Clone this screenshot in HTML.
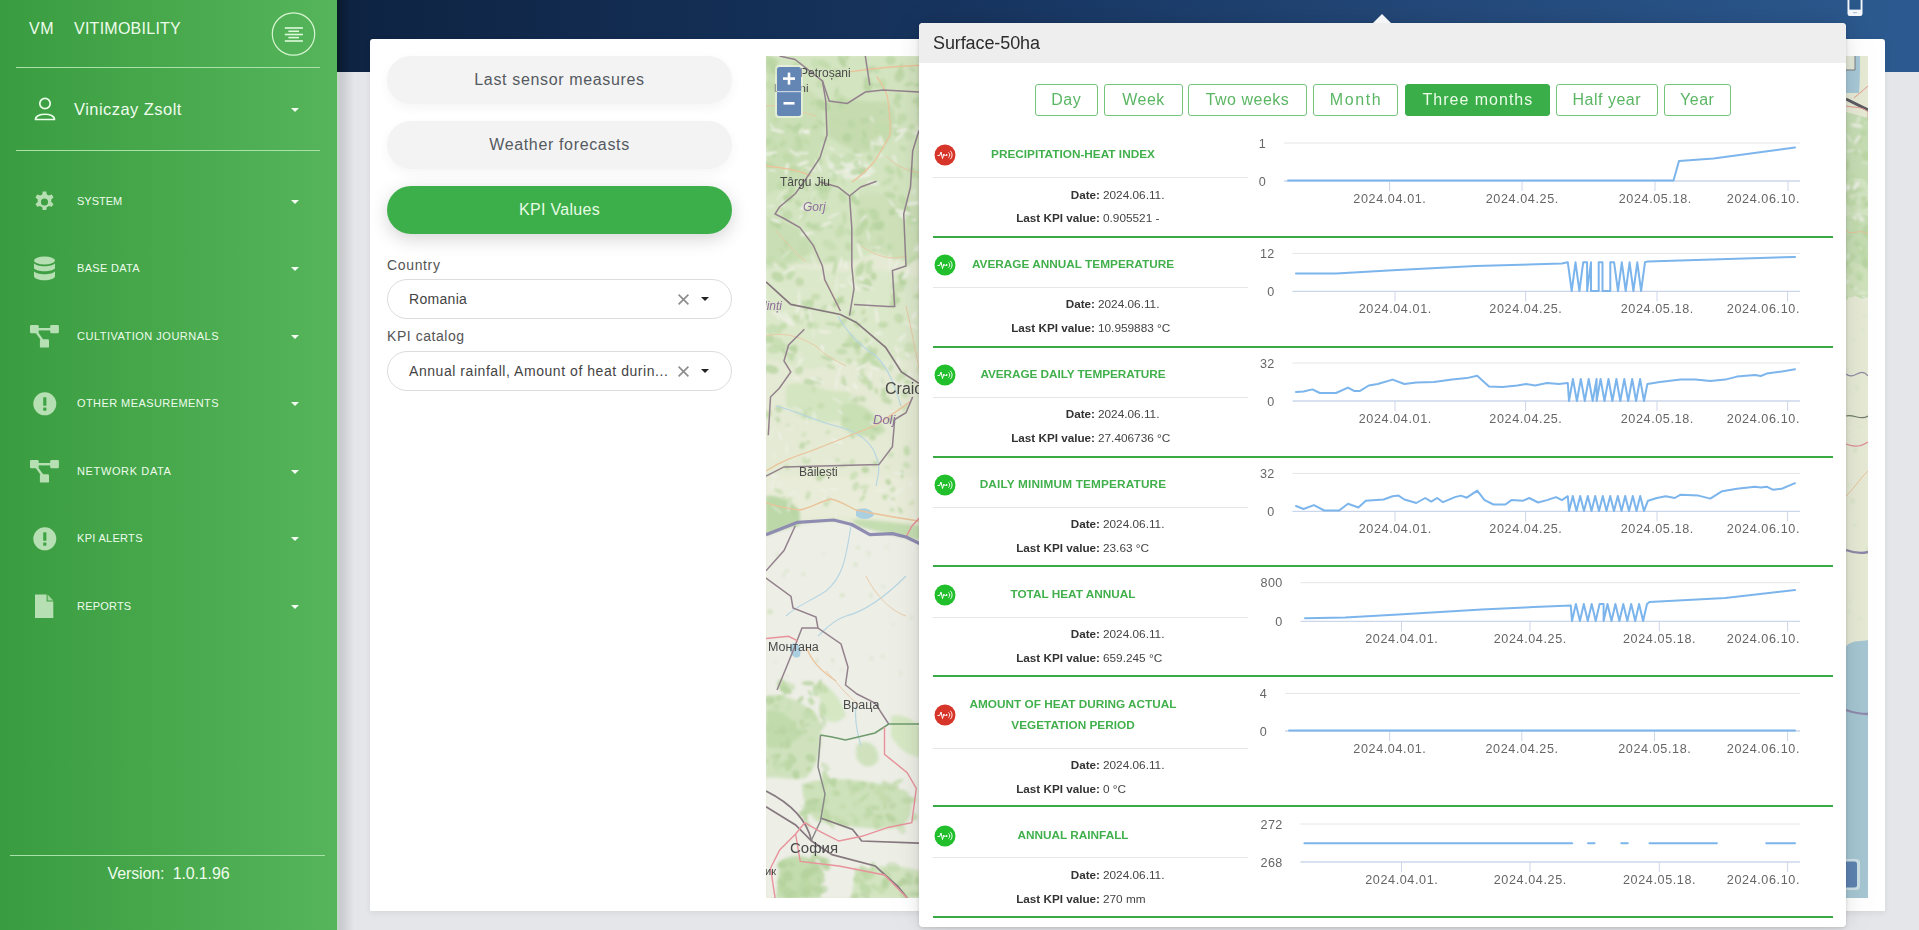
<!DOCTYPE html>
<html><head><meta charset="utf-8"><title>Vitimobility</title>
<style>
html,body{margin:0;padding:0}
body{width:1919px;height:930px;overflow:hidden;position:relative;background:#e5e6ea;font-family:"Liberation Sans",sans-serif}
#sidebar{position:absolute;left:0;top:0;width:337px;height:930px;background:linear-gradient(to right,#3a9c40 0%,#46a74b 45%,#56b55b 100%);z-index:5;color:#e9fbe7}
#sidebar .brand{position:absolute;top:20px;font-size:16px;color:#eefcec;white-space:nowrap}
#sidebar .vm{left:29px;letter-spacing:0.5px}
#sidebar .vt{left:74px;letter-spacing:0.25px}
.hamb{position:absolute;left:271px;top:12px}
.sline{position:absolute;left:16px;width:304px;height:1.3px;background:#a9e2a8}
.usericon{position:absolute;left:34px;top:97px}
.uname{position:absolute;left:74px;top:99.5px;font-size:16.5px;letter-spacing:0.45px;color:#effcee;white-space:nowrap}
.caret{position:absolute;left:291px;width:0;height:0;border-left:4.2px solid transparent;border-right:4.2px solid transparent;border-top:4.6px solid #f2fbf1}
.micon{position:absolute;left:33px}
.mtext{position:absolute;left:77px;font-size:11px;letter-spacing:0.3px;color:#eefcec;white-space:nowrap}
.version{position:absolute;left:0;width:337px;text-align:center;top:864.5px;font-size:16px;color:#eefcec;letter-spacing:-0.15px}
#header{position:absolute;left:337px;top:0;width:1582px;height:72px;background:linear-gradient(to right,#0e2342 0%,#173560 40%,#24497a 70%,#2c5a90 100%)}
#phone{position:absolute;left:1846px;top:0}
#sbshadow{position:absolute;left:337px;top:72px;width:18px;height:858px;z-index:3;background:linear-gradient(to right,rgba(150,200,150,0.45) 0px,rgba(60,60,70,0.16) 4px,rgba(0,0,0,0.08) 9px,rgba(0,0,0,0) 17px)}
#hshadow{position:absolute;left:337px;top:0;width:14px;height:72px;z-index:3;background:linear-gradient(to right,rgba(0,25,15,0.55) 0px,rgba(0,10,20,0.25) 5px,rgba(0,0,0,0) 13px)}
#card{position:absolute;left:370px;top:39px;width:1515px;height:871.5px;background:#fff;border-radius:3px 3px 1px 1px;box-shadow:0 2px 6px rgba(0,0,0,0.07)}
.pill{position:absolute;left:17px;width:345px;height:48px;border-radius:24px;background:#f3f3f4;box-shadow:0 4px 12px rgba(0,0,0,0.045);color:#555a60;font-size:16px;letter-spacing:0.65px;text-align:center;line-height:48px;white-space:nowrap}
.pill.active{background:#3daf4a;color:#e6fbe4;letter-spacing:0.3px;box-shadow:0 5px 18px rgba(0,0,0,0.17)}
.flabel{position:absolute;left:17px;font-size:14px;color:#555;letter-spacing:0.3px}
.sel{position:absolute;left:17px;width:343px;height:38px;border:1px solid #dcdcdc;border-radius:20px;background:#fff}
.selt{position:absolute;left:21px;top:11px;font-size:14px;color:#444;white-space:nowrap}
.selx{position:absolute;left:290px;top:14px;width:11px;height:11px}
.selc{position:absolute;left:313px;top:17px;width:0;height:0;border-left:4.3px solid transparent;border-right:4.3px solid transparent;border-top:4.8px solid #222}
#mapwrap{position:absolute;left:766px;top:56px;width:1102px;height:843px;overflow:hidden}
#map{position:absolute;left:0;top:0}
#popup{position:absolute;left:919px;top:23px;width:927px;height:904px;background:#fff;border-radius:4px;box-shadow:0 1px 4px rgba(0,0,0,0.16),0 0 24px rgba(0,0,0,0.09),0 0 50px rgba(0,0,0,0.04);z-index:6}
#arrow{position:absolute;left:454px;top:-9px;width:0;height:0;border-left:9px solid transparent;border-right:9px solid transparent;border-bottom:9.5px solid #f4f5f7}
#phead{position:absolute;left:0;top:0;width:927px;height:40px;background:#eeeeee;border-radius:4px 4px 0 0;font-size:18px;color:#2c2c2c;line-height:40px;text-indent:14px;letter-spacing:-0.1px}
.tbtn{position:absolute;top:61px;height:31.5px;border:1.3px solid #74c47b;border-radius:3px;color:#5bb664;font-size:16px;text-align:center;line-height:29.5px;letter-spacing:0.5px;box-sizing:border-box;white-space:nowrap}
.tbtn.on{background:#3aae48;border-color:#3aae48;color:#ebfbe8}
.kicon{position:absolute}
.ktitle{position:absolute;left:36px;width:236px;text-align:center;font-size:11.8px;font-weight:700;color:#41b04c;white-space:nowrap;line-height:16px}
.gline{position:absolute;left:14px;width:315px;height:1.3px;background:#e6e6e6;margin-top:-23px}
.grline{position:absolute;left:14px;width:900px;height:2.2px;background:#3aaa45;margin-top:-23px}
.klab{position:absolute;font-size:11.7px;font-weight:700;color:#333;white-space:nowrap;line-height:16px;margin-top:-23px}
.kval{position:absolute;font-size:11.8px;color:#444;white-space:nowrap;line-height:16px;margin-top:-23px}
.ktitle{margin-top:-23px}
.kicon{margin-top:-23px}
.yl{font-family:"Liberation Sans";font-size:12.6px;fill:#666;letter-spacing:0.3px}
.xl{font-family:"Liberation Sans";font-size:12.6px;fill:#666;letter-spacing:0.6px}

</style></head>
<body>
<div id="sidebar">
  <div class="brand vm">VM</div>
  <div class="brand vt">VITIMOBILITY</div>
  <svg class="hamb" width="46" height="46" viewBox="0 0 46 46">
    <circle cx="22.5" cy="22" r="21.2" fill="none" stroke="#d6f5d2" stroke-width="1.2"/>
    <g stroke="#e0fadc" stroke-width="1.6">
      <line x1="13.8" y1="16" x2="31.9" y2="16"/>
      <line x1="17.4" y1="19.3" x2="28" y2="19.3"/>
      <line x1="13.8" y1="22.5" x2="31.9" y2="22.5"/>
      <line x1="17.4" y1="25.6" x2="28" y2="25.6"/>
      <line x1="13.8" y1="29" x2="31.9" y2="29"/>
    </g>
  </svg>
  <div class="sline" style="top:67px"></div>
  <svg class="usericon" width="22" height="24" viewBox="0 0 22 24">
    <circle cx="11" cy="6.5" r="5.2" fill="none" stroke="#eaffea" stroke-width="1.7"/>
    <path d="M1.5 22.5 C1.5 15.5 20.5 15.5 20.5 22.5 Z" fill="none" stroke="#eaffea" stroke-width="1.7" stroke-linejoin="round"/>
  </svg>
  <div class="uname">Viniczay Zsolt</div>
  <div class="caret" style="top:108px"></div>
  <div class="sline" style="top:150px"></div>

  <!-- menu -->
  <svg class="micon" style="top:190px" width="23" height="23" viewBox="0 0 24 24"><path fill="#b6e0b3" d="M10.2 1h3.6l.6 3.1c.8.3 1.5.7 2.2 1.2l3-1 1.8 3.1-2.4 2.1c.1.8.1 1.6 0 2.4l2.4 2.1-1.8 3.1-3-1c-.7.5-1.4.9-2.2 1.2l-.6 3.1h-3.6l-.6-3.1c-.8-.3-1.5-.7-2.2-1.2l-3 1-1.8-3.1 2.4-2.1c-.1-.8-.1-1.6 0-2.4L2.6 7.4l1.8-3.1 3 1c.7-.5 1.4-.9 2.2-1.2zM12 8.3a3.7 3.7 0 100 7.4 3.7 3.7 0 000-7.4z" transform="translate(0,0.5)"/></svg>
  <div class="mtext" style="top:195px;letter-spacing:0px">SYSTEM</div>
  <div class="caret" style="top:200px"></div>

  <svg class="micon" style="top:256px" width="23" height="25" viewBox="0 0 23 25"><g fill="#b6e0b3"><ellipse cx="11.5" cy="4.5" rx="10.5" ry="4"/><path d="M1 7.3c1.5 2 5.5 3 10.5 3s9-1 10.5-3v5c-1.5 2-5.5 3-10.5 3s-9-1-10.5-3z"/><path d="M1 15.3c1.5 2 5.5 3 10.5 3s9-1 10.5-3v5c0 2.2-4.7 4-10.5 4S1 22.5 1 20.3z"/></g></svg>
  <div class="mtext" style="top:262px;letter-spacing:0.3px">BASE DATA</div>
  <div class="caret" style="top:267px"></div>

  <svg class="micon" style="top:324px;left:30px" width="30" height="25" viewBox="0 0 30 25"><g fill="#b6e0b3"><rect x="0" y="1" width="8.7" height="8.3" rx="1.2"/><rect x="20.2" y="1" width="8.7" height="8.3" rx="1.2"/><rect x="9.9" y="15.3" width="9.1" height="8.3" rx="1.2"/><rect x="8" y="4" width="13" height="2.4"/><path d="M5 8 L7 6.8 L14 16.5 L12 17.7z"/></g></svg>
  <div class="mtext" style="top:330px;letter-spacing:0.5px">CULTIVATION JOURNALS</div>
  <div class="caret" style="top:335px"></div>

  <svg class="micon" style="top:392px" width="24" height="24" viewBox="0 0 24 24"><circle cx="11.8" cy="11.8" r="11.5" fill="#b6e0b3"/><rect x="10.2" y="5.2" width="3.2" height="8.6" fill="#3ea444" rx="0.6"/><rect x="10.2" y="15.5" width="3.2" height="3.2" fill="#3ea444" rx="0.6"/></svg>
  <div class="mtext" style="top:397px;letter-spacing:0.42px">OTHER MEASUREMENTS</div>
  <div class="caret" style="top:402px"></div>

  <svg class="micon" style="top:459px;left:30px" width="30" height="25" viewBox="0 0 30 25"><g fill="#b6e0b3"><rect x="0" y="1" width="8.7" height="8.3" rx="1.2"/><rect x="20.2" y="1" width="8.7" height="8.3" rx="1.2"/><rect x="9.9" y="15.3" width="9.1" height="8.3" rx="1.2"/><rect x="8" y="4" width="13" height="2.4"/><path d="M5 8 L7 6.8 L14 16.5 L12 17.7z"/></g></svg>
  <div class="mtext" style="top:465px;letter-spacing:0.63px">NETWORK DATA</div>
  <div class="caret" style="top:470px"></div>

  <svg class="micon" style="top:527px" width="24" height="24" viewBox="0 0 24 24"><circle cx="11.8" cy="11.8" r="11.5" fill="#b6e0b3"/><rect x="10.2" y="5.2" width="3.2" height="8.6" fill="#3ea444" rx="0.6"/><rect x="10.2" y="15.5" width="3.2" height="3.2" fill="#3ea444" rx="0.6"/></svg>
  <div class="mtext" style="top:532px;letter-spacing:0.3px">KPI ALERTS</div>
  <div class="caret" style="top:537px"></div>

  <svg class="micon" style="top:594px;left:35px" width="19" height="24" viewBox="0 0 19 24"><path fill="#b6e0b3" d="M0 0.5h11.6v7h6.7v16.4H0z"/><path fill="#9fd69c" d="M12.6 0.5l5.7 6H12.6z"/></svg>
  <div class="mtext" style="top:600px;letter-spacing:0.2px">REPORTS</div>
  <div class="caret" style="top:605px"></div>

  <div class="sline" style="top:855px;left:10px;width:315px"></div>
  <div class="version">Version:&nbsp; 1.0.1.96</div>
</div>

<div id="header"></div>
<svg id="phone" width="18" height="17" viewBox="0 0 18 17"><path d="M3.8 -3 H14.2 A2.3 2.3 0 0 1 16.5 -0.7 V13.8 A2.3 2.3 0 0 1 14.2 16.1 H3.8 A2.3 2.3 0 0 1 1.5 13.8 V-0.7 A2.3 2.3 0 0 1 3.8 -3Z" fill="#f4f7fb"/><rect x="3.4" y="-3" width="11.2" height="12.6" fill="#2a5789"/><rect x="7" y="12" width="4" height="1.2" fill="#b9c6d8"/></svg>
<div id="sbshadow"></div><div id="hshadow"></div>
<div id="card">
  <div class="pill" style="top:17px">Last sensor measures</div>
  <div class="pill" style="top:82px">Weather forecasts</div>
  <div class="pill active" style="top:147px">KPI Values</div>
  <div class="flabel" style="top:217.5px;letter-spacing:0.65px">Country</div>
  <div class="sel" style="top:240px"><span class="selt" style="letter-spacing:0.3px">Romania</span><svg class="selx" viewBox="0 0 11 11"><path d="M0.6 0.6L10.4 10.4M10.4 0.6L0.6 10.4" stroke="#8c8c8c" stroke-width="1.6"/></svg><span class="selc"></span></div>
  <div class="flabel" style="top:289px;letter-spacing:0.55px">KPI catalog</div>
  <div class="sel" style="top:312px"><span class="selt" style="letter-spacing:0.55px">Annual rainfall, Amount of heat durin...</span><svg class="selx" viewBox="0 0 11 11"><path d="M0.6 0.6L10.4 10.4M10.4 0.6L0.6 10.4" stroke="#8c8c8c" stroke-width="1.6"/></svg><span class="selc"></span></div>
</div>

<div id="mapwrap"><svg id="map" width="1102" height="842" viewBox="0 0 1102 842">
  <defs>
    <filter id="bl" x="-10%" y="-10%" width="120%" height="120%"><feGaussianBlur stdDeviation="1.6"/></filter>
    <filter id="bl2" x="0" y="0" width="100%" height="100%"><feGaussianBlur stdDeviation="0.9"/></filter>
  </defs>
  <rect x="0" y="0" width="160" height="842" fill="#e4ead3"/>
  <g filter="url(#bl)">
    <!-- north greener region -->
    <path d="M0 0 H160 V200 C140 210 120 190 100 200 C70 215 40 200 0 215Z" fill="#d3e4c0"/>
    <path d="M0 20 C20 10 40 30 55 45 C60 70 58 100 40 120 C25 135 10 130 0 140Z" fill="#cadfb5"/>
    <path d="M60 45 C80 40 100 48 120 45 C135 55 130 80 115 95 C95 100 75 90 62 80Z" fill="#c6dcb0"/>
    <path d="M90 140 C110 130 140 150 160 145 V200 C130 215 110 190 90 190Z" fill="#cde0b8"/>
    <path d="M0 160 C20 165 40 175 50 190 C40 205 20 210 0 210Z" fill="#c9deb4"/>
    <path d="M60 100 C80 95 100 105 110 115 C100 125 80 125 65 120Z" fill="#e6eddb"/>
    <path d="M0 215 C30 205 60 220 90 215 C120 210 140 225 160 220 V300 C130 310 90 300 60 310 C30 320 15 300 0 305Z" fill="#dce8ca"/>
    <path d="M20 330 C40 320 60 340 80 335 C100 345 90 365 70 365 C50 370 30 360 20 350Z" fill="#d4e5c1"/>
    <path d="M75 350 C95 340 110 360 120 375 C105 385 85 380 75 370Z" fill="#c9dfb4"/>
    <path d="M0 420 H160 V470 C130 465 100 462 70 460 C40 462 20 470 0 472Z" fill="#e8ecd8"/>
    <path d="M0 440 C15 438 30 448 34 456 V476 C20 477 10 478 0 479Z" fill="#bcd8a8"/>
    <path d="M86 464 C100 462 130 468 160 470 V485 C130 480 110 478 95 474Z" fill="#c4ddb0"/>
    <!-- south of danube -->
    <path d="M0 480 C30 468 60 463 86 468 C105 476 130 478 160 488 V842 H0Z" fill="#edeee6"/>
    <path d="M0 640 C20 635 45 650 54 665 C58 690 52 710 40 722 C25 725 10 720 0 722Z" fill="#cfe2bd"/>
    <path d="M0 655 C15 650 30 665 35 680 C25 690 10 695 0 690Z" fill="#c2dbad"/>
    <path d="M36 728 C60 720 100 722 141 735 C150 750 145 770 130 772 C100 775 70 768 50 765 C40 755 36 740 36 728Z" fill="#cde1ba"/>
    <path d="M90 690 C100 680 115 690 112 705 C105 715 92 710 90 700Z" fill="#cfe2bd"/>
    <path d="M14 805 C30 795 50 800 55 815 V842 H10Z" fill="#c3dcae"/>
    <path d="M90 815 C120 805 150 812 160 818 V842 H85Z" fill="#d2e4c0"/>
    <path d="M52 630 C60 625 75 640 80 660 C70 670 60 668 55 655Z" fill="#d6e7c4"/>
    <path d="M125 660 C140 655 155 670 160 680 V700 C145 705 130 690 125 680Z" fill="#d6e7c4"/>
  </g>
  <g id="tex" filter="url(#bl2)"><ellipse cx="51.8" cy="49.8" rx="5.9" ry="1.8" transform="rotate(96 51.8 49.8)" fill="#c2dbac" opacity="0.73"/><ellipse cx="145.6" cy="70.9" rx="2.5" ry="3.0" transform="rotate(43 145.6 70.9)" fill="#b7d3a0" opacity="0.67"/><ellipse cx="132.3" cy="40.9" rx="3.3" ry="3.7" transform="rotate(171 132.3 40.9)" fill="#b7d3a0" opacity="0.73"/><ellipse cx="7.9" cy="73.0" rx="5.3" ry="2.0" transform="rotate(75 7.9 73.0)" fill="#b7d3a0" opacity="0.55"/><ellipse cx="49.4" cy="269.3" rx="3.1" ry="3.5" transform="rotate(115 49.4 269.3)" fill="#c2dbac" opacity="0.54"/><ellipse cx="113.9" cy="186.2" rx="5.7" ry="3.2" transform="rotate(96 113.9 186.2)" fill="#c2dbac" opacity="0.69"/><ellipse cx="147.8" cy="119.3" rx="3.5" ry="2.1" transform="rotate(140 147.8 119.3)" fill="#bcd7a5" opacity="0.73"/><ellipse cx="84.0" cy="288.8" rx="6.4" ry="2.5" transform="rotate(176 84.0 288.8)" fill="#bcd7a5" opacity="0.70"/><ellipse cx="26.4" cy="112.9" rx="7.6" ry="3.0" transform="rotate(173 26.4 112.9)" fill="#bcd7a5" opacity="0.81"/><ellipse cx="91.7" cy="288.9" rx="3.9" ry="3.9" transform="rotate(107 91.7 288.9)" fill="#b7d3a0" opacity="0.82"/><ellipse cx="11.0" cy="30.9" rx="3.6" ry="3.9" transform="rotate(12 11.0 30.9)" fill="#b7d3a0" opacity="0.78"/><ellipse cx="103.5" cy="327.7" rx="6.9" ry="2.5" transform="rotate(69 103.5 327.7)" fill="#b7d3a0" opacity="0.64"/><ellipse cx="150.5" cy="117.3" rx="5.7" ry="3.2" transform="rotate(39 150.5 117.3)" fill="#c2dbac" opacity="0.55"/><ellipse cx="39.6" cy="129.0" rx="7.2" ry="1.8" transform="rotate(81 39.6 129.0)" fill="#b7d3a0" opacity="0.61"/><ellipse cx="21.9" cy="142.1" rx="5.3" ry="4.0" transform="rotate(178 21.9 142.1)" fill="#b7d3a0" opacity="0.85"/><ellipse cx="153.2" cy="49.8" rx="3.1" ry="2.3" transform="rotate(42 153.2 49.8)" fill="#c2dbac" opacity="0.83"/><ellipse cx="29.2" cy="93.0" rx="2.9" ry="3.4" transform="rotate(110 29.2 93.0)" fill="#c2dbac" opacity="0.88"/><ellipse cx="110.5" cy="170.1" rx="5.7" ry="3.9" transform="rotate(10 110.5 170.1)" fill="#b7d3a0" opacity="0.82"/><ellipse cx="62.8" cy="131.7" rx="2.6" ry="3.7" transform="rotate(11 62.8 131.7)" fill="#bcd7a5" opacity="0.89"/><ellipse cx="70.5" cy="36.3" rx="5.6" ry="1.9" transform="rotate(102 70.5 36.3)" fill="#b7d3a0" opacity="0.54"/><ellipse cx="58.2" cy="8.4" rx="7.2" ry="3.6" transform="rotate(27 58.2 8.4)" fill="#c2dbac" opacity="0.88"/><ellipse cx="96.4" cy="156.5" rx="2.7" ry="3.2" transform="rotate(176 96.4 156.5)" fill="#c2dbac" opacity="0.69"/><ellipse cx="13.7" cy="33.7" rx="4.1" ry="2.4" transform="rotate(149 13.7 33.7)" fill="#bcd7a5" opacity="0.71"/><ellipse cx="32.8" cy="314.2" rx="4.2" ry="3.9" transform="rotate(165 32.8 314.2)" fill="#b7d3a0" opacity="0.62"/><ellipse cx="102.9" cy="30.0" rx="7.1" ry="3.3" transform="rotate(163 102.9 30.0)" fill="#c2dbac" opacity="0.81"/><ellipse cx="85.2" cy="257.1" rx="4.0" ry="2.3" transform="rotate(146 85.2 257.1)" fill="#bcd7a5" opacity="0.82"/><ellipse cx="130.9" cy="244.2" rx="3.4" ry="3.3" transform="rotate(64 130.9 244.2)" fill="#bcd7a5" opacity="0.90"/><ellipse cx="126.4" cy="155.8" rx="3.2" ry="3.6" transform="rotate(62 126.4 155.8)" fill="#b7d3a0" opacity="0.90"/><ellipse cx="152.8" cy="120.3" rx="3.3" ry="2.3" transform="rotate(35 152.8 120.3)" fill="#bcd7a5" opacity="0.69"/><ellipse cx="157.6" cy="201.4" rx="2.0" ry="4.7" transform="rotate(62 157.6 201.4)" fill="#b7d3a0" opacity="0.53"/><ellipse cx="105.7" cy="300.2" rx="6.7" ry="4.1" transform="rotate(86 105.7 300.2)" fill="#bcd7a5" opacity="0.67"/><ellipse cx="101.7" cy="28.6" rx="7.7" ry="4.0" transform="rotate(83 101.7 28.6)" fill="#b7d3a0" opacity="0.88"/><ellipse cx="116.0" cy="56.1" rx="2.8" ry="2.0" transform="rotate(163 116.0 56.1)" fill="#b7d3a0" opacity="0.56"/><ellipse cx="132.2" cy="323.5" rx="5.9" ry="2.7" transform="rotate(99 132.2 323.5)" fill="#bcd7a5" opacity="0.51"/><ellipse cx="127.9" cy="239.7" rx="2.6" ry="4.1" transform="rotate(25 127.9 239.7)" fill="#bcd7a5" opacity="0.83"/><ellipse cx="33.8" cy="83.1" rx="3.8" ry="2.3" transform="rotate(106 33.8 83.1)" fill="#c2dbac" opacity="0.72"/><ellipse cx="133.5" cy="20.1" rx="6.4" ry="4.6" transform="rotate(119 133.5 20.1)" fill="#b7d3a0" opacity="0.67"/><ellipse cx="146.8" cy="165.5" rx="5.2" ry="3.3" transform="rotate(3 146.8 165.5)" fill="#c2dbac" opacity="0.81"/><ellipse cx="97.4" cy="256.1" rx="2.9" ry="2.0" transform="rotate(111 97.4 256.1)" fill="#bcd7a5" opacity="0.72"/><ellipse cx="52.2" cy="171.1" rx="5.3" ry="4.2" transform="rotate(19 52.2 171.1)" fill="#b7d3a0" opacity="0.52"/><ellipse cx="30.6" cy="13.9" rx="2.6" ry="3.1" transform="rotate(5 30.6 13.9)" fill="#bcd7a5" opacity="0.68"/><ellipse cx="98.0" cy="166.8" rx="5.1" ry="3.9" transform="rotate(81 98.0 166.8)" fill="#b7d3a0" opacity="0.82"/><ellipse cx="81.2" cy="81.7" rx="5.1" ry="4.6" transform="rotate(167 81.2 81.7)" fill="#b7d3a0" opacity="0.86"/><ellipse cx="32.4" cy="147.7" rx="4.5" ry="2.9" transform="rotate(57 32.4 147.7)" fill="#b7d3a0" opacity="0.60"/><ellipse cx="11.7" cy="220.9" rx="6.7" ry="4.6" transform="rotate(28 11.7 220.9)" fill="#b7d3a0" opacity="0.76"/><ellipse cx="58.6" cy="83.5" rx="2.8" ry="3.1" transform="rotate(134 58.6 83.5)" fill="#bcd7a5" opacity="0.66"/><ellipse cx="78.0" cy="326.7" rx="7.0" ry="2.1" transform="rotate(78 78.0 326.7)" fill="#b7d3a0" opacity="0.66"/><ellipse cx="67.4" cy="117.7" rx="2.6" ry="2.8" transform="rotate(61 67.4 117.7)" fill="#c2dbac" opacity="0.68"/><ellipse cx="2.9" cy="109.4" rx="5.7" ry="3.3" transform="rotate(12 2.9 109.4)" fill="#bcd7a5" opacity="0.89"/><ellipse cx="16.8" cy="87.6" rx="2.2" ry="4.2" transform="rotate(49 16.8 87.6)" fill="#bcd7a5" opacity="0.83"/><ellipse cx="135.9" cy="223.1" rx="7.7" ry="2.9" transform="rotate(97 135.9 223.1)" fill="#b7d3a0" opacity="0.73"/><ellipse cx="112.1" cy="29.5" rx="2.3" ry="3.9" transform="rotate(77 112.1 29.5)" fill="#bcd7a5" opacity="0.61"/><ellipse cx="2.7" cy="29.2" rx="3.6" ry="3.6" transform="rotate(40 2.7 29.2)" fill="#c2dbac" opacity="0.85"/><ellipse cx="72.6" cy="111.9" rx="5.3" ry="4.7" transform="rotate(48 72.6 111.9)" fill="#bcd7a5" opacity="0.52"/><ellipse cx="113.5" cy="309.6" rx="7.8" ry="2.4" transform="rotate(33 113.5 309.6)" fill="#c2dbac" opacity="0.75"/><ellipse cx="85.0" cy="67.9" rx="4.7" ry="3.9" transform="rotate(49 85.0 67.9)" fill="#bcd7a5" opacity="0.90"/><ellipse cx="5.9" cy="6.1" rx="5.0" ry="4.9" transform="rotate(93 5.9 6.1)" fill="#bcd7a5" opacity="0.87"/><ellipse cx="17.0" cy="270.2" rx="4.6" ry="3.2" transform="rotate(150 17.0 270.2)" fill="#c2dbac" opacity="0.89"/><ellipse cx="49.2" cy="71.0" rx="3.4" ry="2.2" transform="rotate(159 49.2 71.0)" fill="#b7d3a0" opacity="0.75"/><ellipse cx="64.8" cy="114.7" rx="2.3" ry="2.0" transform="rotate(13 64.8 114.7)" fill="#b7d3a0" opacity="0.85"/><ellipse cx="68.9" cy="18.3" rx="6.0" ry="2.8" transform="rotate(91 68.9 18.3)" fill="#c2dbac" opacity="0.74"/><ellipse cx="110.8" cy="14.9" rx="3.1" ry="2.4" transform="rotate(1 110.8 14.9)" fill="#c2dbac" opacity="0.88"/><ellipse cx="155.6" cy="180.5" rx="3.5" ry="4.9" transform="rotate(56 155.6 180.5)" fill="#c2dbac" opacity="0.57"/><ellipse cx="53.7" cy="27.7" rx="3.7" ry="3.8" transform="rotate(45 53.7 27.7)" fill="#bcd7a5" opacity="0.54"/><ellipse cx="130.7" cy="47.5" rx="5.5" ry="2.9" transform="rotate(54 130.7 47.5)" fill="#b7d3a0" opacity="0.59"/><ellipse cx="93.7" cy="174.6" rx="6.5" ry="3.8" transform="rotate(129 93.7 174.6)" fill="#b7d3a0" opacity="0.66"/><ellipse cx="52.2" cy="325.0" rx="2.9" ry="4.0" transform="rotate(116 52.2 325.0)" fill="#bcd7a5" opacity="0.83"/><ellipse cx="114.4" cy="169.3" rx="4.6" ry="4.0" transform="rotate(91 114.4 169.3)" fill="#b7d3a0" opacity="0.80"/><ellipse cx="91.0" cy="268.3" rx="2.1" ry="3.9" transform="rotate(144 91.0 268.3)" fill="#b7d3a0" opacity="0.77"/><ellipse cx="110.9" cy="75.9" rx="2.2" ry="2.0" transform="rotate(65 110.9 75.9)" fill="#bcd7a5" opacity="0.65"/><ellipse cx="72.2" cy="16.8" rx="2.1" ry="3.4" transform="rotate(44 72.2 16.8)" fill="#c2dbac" opacity="0.50"/><ellipse cx="127.6" cy="246.9" rx="5.0" ry="3.4" transform="rotate(119 127.6 246.9)" fill="#bcd7a5" opacity="0.80"/><ellipse cx="75.8" cy="267.0" rx="7.1" ry="2.3" transform="rotate(136 75.8 267.0)" fill="#bcd7a5" opacity="0.80"/><ellipse cx="156.1" cy="163.0" rx="4.3" ry="3.2" transform="rotate(123 156.1 163.0)" fill="#bcd7a5" opacity="0.75"/><ellipse cx="102.8" cy="25.6" rx="2.9" ry="2.4" transform="rotate(134 102.8 25.6)" fill="#c2dbac" opacity="0.75"/><ellipse cx="21.4" cy="159.2" rx="4.9" ry="4.9" transform="rotate(18 21.4 159.2)" fill="#bcd7a5" opacity="0.77"/><ellipse cx="46.5" cy="170.5" rx="4.8" ry="3.1" transform="rotate(21 46.5 170.5)" fill="#b7d3a0" opacity="0.58"/><ellipse cx="156.5" cy="309.0" rx="2.1" ry="3.1" transform="rotate(148 156.5 309.0)" fill="#c2dbac" opacity="0.90"/><ellipse cx="61.9" cy="302.5" rx="7.6" ry="1.8" transform="rotate(16 61.9 302.5)" fill="#b7d3a0" opacity="0.71"/><ellipse cx="152.4" cy="43.8" rx="6.9" ry="3.3" transform="rotate(160 152.4 43.8)" fill="#b7d3a0" opacity="0.65"/><ellipse cx="79.7" cy="289.1" rx="4.4" ry="2.1" transform="rotate(171 79.7 289.1)" fill="#b7d3a0" opacity="0.68"/><ellipse cx="48.3" cy="46.4" rx="4.1" ry="2.6" transform="rotate(151 48.3 46.4)" fill="#bcd7a5" opacity="0.63"/><ellipse cx="54.1" cy="131.4" rx="7.6" ry="2.2" transform="rotate(2 54.1 131.4)" fill="#b7d3a0" opacity="0.62"/><ellipse cx="59.6" cy="129.7" rx="8.0" ry="3.6" transform="rotate(65 59.6 129.7)" fill="#c2dbac" opacity="0.80"/><ellipse cx="136.7" cy="92.6" rx="2.3" ry="3.8" transform="rotate(114 136.7 92.6)" fill="#bcd7a5" opacity="0.60"/><ellipse cx="42.5" cy="168.6" rx="3.1" ry="2.8" transform="rotate(172 42.5 168.6)" fill="#bcd7a5" opacity="0.82"/><ellipse cx="100.9" cy="301.4" rx="7.6" ry="3.4" transform="rotate(130 100.9 301.4)" fill="#bcd7a5" opacity="0.87"/><ellipse cx="65.7" cy="202.9" rx="2.8" ry="4.5" transform="rotate(87 65.7 202.9)" fill="#b7d3a0" opacity="0.55"/><ellipse cx="75.5" cy="113.4" rx="3.8" ry="4.1" transform="rotate(176 75.5 113.4)" fill="#c2dbac" opacity="0.66"/><ellipse cx="38.2" cy="159.5" rx="6.0" ry="1.9" transform="rotate(116 38.2 159.5)" fill="#bcd7a5" opacity="0.58"/><ellipse cx="145.0" cy="164.0" rx="3.3" ry="4.7" transform="rotate(179 145.0 164.0)" fill="#c2dbac" opacity="0.67"/><ellipse cx="87.6" cy="80.5" rx="3.0" ry="3.4" transform="rotate(57 87.6 80.5)" fill="#c2dbac" opacity="0.60"/><ellipse cx="91.1" cy="292.8" rx="6.5" ry="2.9" transform="rotate(74 91.1 292.8)" fill="#b7d3a0" opacity="0.58"/><ellipse cx="43.2" cy="248.2" rx="5.0" ry="3.5" transform="rotate(65 43.2 248.2)" fill="#b7d3a0" opacity="0.70"/><ellipse cx="100.7" cy="284.7" rx="3.3" ry="2.4" transform="rotate(45 100.7 284.7)" fill="#c2dbac" opacity="0.76"/><ellipse cx="69.1" cy="103.0" rx="6.9" ry="4.9" transform="rotate(23 69.1 103.0)" fill="#c2dbac" opacity="0.78"/><ellipse cx="143.3" cy="156.2" rx="5.5" ry="1.5" transform="rotate(70 143.3 156.2)" fill="#b7d3a0" opacity="0.84"/><ellipse cx="155.6" cy="82.0" rx="2.7" ry="2.0" transform="rotate(94 155.6 82.0)" fill="#b7d3a0" opacity="0.54"/><ellipse cx="132.1" cy="231.3" rx="7.1" ry="4.6" transform="rotate(15 132.1 231.3)" fill="#bcd7a5" opacity="0.50"/><ellipse cx="20.1" cy="187.9" rx="2.2" ry="4.0" transform="rotate(173 20.1 187.9)" fill="#b7d3a0" opacity="0.60"/><ellipse cx="101.8" cy="230.5" rx="2.7" ry="1.7" transform="rotate(94 101.8 230.5)" fill="#b7d3a0" opacity="0.58"/><ellipse cx="41.7" cy="260.9" rx="2.0" ry="3.4" transform="rotate(179 41.7 260.9)" fill="#c2dbac" opacity="0.88"/><ellipse cx="103.1" cy="291.6" rx="4.9" ry="2.3" transform="rotate(44 103.1 291.6)" fill="#c2dbac" opacity="0.78"/><ellipse cx="49.2" cy="7.2" rx="5.0" ry="3.9" transform="rotate(76 49.2 7.2)" fill="#c2dbac" opacity="0.59"/><ellipse cx="67.9" cy="122.2" rx="5.0" ry="3.9" transform="rotate(129 67.9 122.2)" fill="#c2dbac" opacity="0.77"/><ellipse cx="31.7" cy="263.0" rx="6.4" ry="3.3" transform="rotate(37 31.7 263.0)" fill="#bcd7a5" opacity="0.62"/><ellipse cx="131.2" cy="76.2" rx="3.3" ry="4.2" transform="rotate(53 131.2 76.2)" fill="#b7d3a0" opacity="0.70"/><ellipse cx="30.0" cy="73.7" rx="4.5" ry="3.8" transform="rotate(171 30.0 73.7)" fill="#bcd7a5" opacity="0.87"/><ellipse cx="8.7" cy="7.8" rx="5.6" ry="3.0" transform="rotate(128 8.7 7.8)" fill="#bcd7a5" opacity="0.66"/><ellipse cx="143.7" cy="291.6" rx="6.4" ry="5.0" transform="rotate(168 143.7 291.6)" fill="#c2dbac" opacity="0.58"/><ellipse cx="104.4" cy="173.2" rx="4.8" ry="2.6" transform="rotate(131 104.4 173.2)" fill="#c2dbac" opacity="0.89"/><ellipse cx="70.8" cy="36.0" rx="2.5" ry="1.8" transform="rotate(76 70.8 36.0)" fill="#bcd7a5" opacity="0.72"/><ellipse cx="121.4" cy="125.4" rx="6.6" ry="2.6" transform="rotate(145 121.4 125.4)" fill="#bcd7a5" opacity="0.52"/><ellipse cx="75.8" cy="123.0" rx="7.5" ry="2.2" transform="rotate(66 75.8 123.0)" fill="#c2dbac" opacity="0.51"/><ellipse cx="65.7" cy="267.9" rx="6.6" ry="1.6" transform="rotate(6 65.7 267.9)" fill="#bcd7a5" opacity="0.82"/><ellipse cx="9.9" cy="64.3" rx="2.4" ry="3.6" transform="rotate(65 9.9 64.3)" fill="#c2dbac" opacity="0.88"/><ellipse cx="98.7" cy="86.5" rx="6.3" ry="2.6" transform="rotate(50 98.7 86.5)" fill="#bcd7a5" opacity="0.79"/><ellipse cx="95.3" cy="265.9" rx="7.7" ry="1.7" transform="rotate(149 95.3 265.9)" fill="#bcd7a5" opacity="0.69"/><ellipse cx="153.1" cy="314.8" rx="4.3" ry="2.4" transform="rotate(77 153.1 314.8)" fill="#c2dbac" opacity="0.55"/><ellipse cx="79.4" cy="2.9" rx="7.6" ry="2.6" transform="rotate(125 79.4 2.9)" fill="#bcd7a5" opacity="0.74"/><ellipse cx="52.4" cy="105.5" rx="4.2" ry="4.2" transform="rotate(14 52.4 105.5)" fill="#bcd7a5" opacity="0.66"/><ellipse cx="25.6" cy="134.6" rx="5.9" ry="3.2" transform="rotate(98 25.6 134.6)" fill="#bcd7a5" opacity="0.89"/><ellipse cx="141.4" cy="326.0" rx="3.6" ry="1.8" transform="rotate(17 141.4 326.0)" fill="#c2dbac" opacity="0.90"/><ellipse cx="155.5" cy="57.2" rx="2.8" ry="3.1" transform="rotate(160 155.5 57.2)" fill="#bcd7a5" opacity="0.80"/><ellipse cx="135.5" cy="219.3" rx="2.7" ry="4.4" transform="rotate(53 135.5 219.3)" fill="#b7d3a0" opacity="0.61"/><ellipse cx="40.6" cy="85.9" rx="4.6" ry="2.2" transform="rotate(42 40.6 85.9)" fill="#c2dbac" opacity="0.85"/><ellipse cx="92.5" cy="107.7" rx="4.4" ry="5.0" transform="rotate(91 92.5 107.7)" fill="#bcd7a5" opacity="0.76"/><ellipse cx="16.1" cy="153.1" rx="2.2" ry="1.5" transform="rotate(159 16.1 153.1)" fill="#bcd7a5" opacity="0.84"/><ellipse cx="146.3" cy="13.3" rx="3.8" ry="1.9" transform="rotate(34 146.3 13.3)" fill="#b7d3a0" opacity="0.58"/><ellipse cx="12.0" cy="169.2" rx="3.1" ry="3.6" transform="rotate(139 12.0 169.2)" fill="#b7d3a0" opacity="0.88"/><ellipse cx="16.9" cy="196.7" rx="5.7" ry="2.3" transform="rotate(66 16.9 196.7)" fill="#bcd7a5" opacity="0.52"/><ellipse cx="160.0" cy="12.6" rx="6.4" ry="4.7" transform="rotate(147 160.0 12.6)" fill="#c2dbac" opacity="0.66"/><ellipse cx="59.5" cy="204.9" rx="2.5" ry="1.6" transform="rotate(89 59.5 204.9)" fill="#c2dbac" opacity="0.53"/><ellipse cx="16.2" cy="130.4" rx="5.3" ry="3.7" transform="rotate(16 16.2 130.4)" fill="#bcd7a5" opacity="0.66"/><ellipse cx="43.4" cy="326.1" rx="6.0" ry="3.0" transform="rotate(9 43.4 326.1)" fill="#b7d3a0" opacity="0.73"/><ellipse cx="57.1" cy="137.4" rx="7.2" ry="5.0" transform="rotate(65 57.1 137.4)" fill="#bcd7a5" opacity="0.66"/><ellipse cx="64.8" cy="310.9" rx="4.6" ry="2.0" transform="rotate(20 64.8 310.9)" fill="#bcd7a5" opacity="0.66"/><ellipse cx="141.3" cy="152.1" rx="3.0" ry="1.6" transform="rotate(99 141.3 152.1)" fill="#b7d3a0" opacity="0.82"/><ellipse cx="63.5" cy="189.0" rx="7.6" ry="4.1" transform="rotate(31 63.5 189.0)" fill="#c2dbac" opacity="0.61"/><ellipse cx="83.4" cy="305.4" rx="2.7" ry="3.2" transform="rotate(145 83.4 305.4)" fill="#bcd7a5" opacity="0.62"/><ellipse cx="134.0" cy="14.4" rx="7.5" ry="2.6" transform="rotate(109 134.0 14.4)" fill="#b7d3a0" opacity="0.66"/><ellipse cx="144.7" cy="204.7" rx="6.9" ry="2.1" transform="rotate(141 144.7 204.7)" fill="#bcd7a5" opacity="0.75"/><ellipse cx="98.4" cy="64.7" rx="4.8" ry="3.5" transform="rotate(8 98.4 64.7)" fill="#b7d3a0" opacity="0.56"/><ellipse cx="57.5" cy="49.3" rx="7.8" ry="4.4" transform="rotate(35 57.5 49.3)" fill="#b7d3a0" opacity="0.84"/><ellipse cx="107.6" cy="220.4" rx="3.9" ry="2.9" transform="rotate(82 107.6 220.4)" fill="#b7d3a0" opacity="0.81"/><ellipse cx="103.8" cy="101.7" rx="3.5" ry="2.9" transform="rotate(66 103.8 101.7)" fill="#b7d3a0" opacity="0.68"/><ellipse cx="3.7" cy="204.2" rx="4.9" ry="2.3" transform="rotate(137 3.7 204.2)" fill="#c2dbac" opacity="0.83"/><ellipse cx="129.7" cy="132.1" rx="2.4" ry="2.8" transform="rotate(66 129.7 132.1)" fill="#c2dbac" opacity="0.70"/><ellipse cx="105.1" cy="13.4" rx="2.8" ry="4.7" transform="rotate(56 105.1 13.4)" fill="#b7d3a0" opacity="0.70"/><ellipse cx="8.7" cy="166.3" rx="4.3" ry="4.8" transform="rotate(25 8.7 166.3)" fill="#bcd7a5" opacity="0.90"/><ellipse cx="117.1" cy="268.9" rx="3.2" ry="4.9" transform="rotate(89 117.1 268.9)" fill="#bcd7a5" opacity="0.77"/><ellipse cx="115.4" cy="73.0" rx="7.0" ry="3.6" transform="rotate(45 115.4 73.0)" fill="#c2dbac" opacity="0.86"/><ellipse cx="44.0" cy="269.2" rx="2.9" ry="3.3" transform="rotate(166 44.0 269.2)" fill="#bcd7a5" opacity="0.74"/><ellipse cx="98.5" cy="78.3" rx="4.2" ry="2.2" transform="rotate(73 98.5 78.3)" fill="#b7d3a0" opacity="0.87"/><ellipse cx="108.7" cy="295.5" rx="3.0" ry="4.2" transform="rotate(21 108.7 295.5)" fill="#b7d3a0" opacity="0.52"/><ellipse cx="137.3" cy="318.8" rx="4.7" ry="3.3" transform="rotate(124 137.3 318.8)" fill="#bcd7a5" opacity="0.60"/><ellipse cx="85.7" cy="282.7" rx="6.4" ry="2.8" transform="rotate(68 85.7 282.7)" fill="#c2dbac" opacity="0.73"/><ellipse cx="57.6" cy="252.3" rx="4.7" ry="2.1" transform="rotate(134 57.6 252.3)" fill="#bcd7a5" opacity="0.62"/><ellipse cx="82.6" cy="102.3" rx="7.8" ry="4.5" transform="rotate(167 82.6 102.3)" fill="#c2dbac" opacity="0.79"/><ellipse cx="119.5" cy="73.1" rx="3.7" ry="3.7" transform="rotate(75 119.5 73.1)" fill="#c2dbac" opacity="0.86"/><ellipse cx="21.1" cy="75.0" rx="5.9" ry="1.6" transform="rotate(0 21.1 75.0)" fill="#c2dbac" opacity="0.62"/><ellipse cx="83.7" cy="176.3" rx="4.5" ry="2.6" transform="rotate(24 83.7 176.3)" fill="#c2dbac" opacity="0.75"/><ellipse cx="76.0" cy="44.5" rx="7.6" ry="2.4" transform="rotate(27 76.0 44.5)" fill="#bcd7a5" opacity="0.53"/><ellipse cx="23.2" cy="219.6" rx="3.6" ry="4.3" transform="rotate(174 23.2 219.6)" fill="#bcd7a5" opacity="0.76"/><ellipse cx="90.0" cy="115.6" rx="5.9" ry="3.1" transform="rotate(169 90.0 115.6)" fill="#b7d3a0" opacity="0.70"/><ellipse cx="26.4" cy="0.1" rx="2.4" ry="1.6" transform="rotate(33 26.4 0.1)" fill="#bcd7a5" opacity="0.52"/><ellipse cx="124.6" cy="4.1" rx="5.3" ry="4.8" transform="rotate(26 124.6 4.1)" fill="#bcd7a5" opacity="0.71"/><ellipse cx="102.8" cy="213.7" rx="4.5" ry="3.6" transform="rotate(92 102.8 213.7)" fill="#bcd7a5" opacity="0.62"/><ellipse cx="7.8" cy="293.5" rx="6.7" ry="4.0" transform="rotate(1 7.8 293.5)" fill="#c2dbac" opacity="0.80"/><ellipse cx="74.4" cy="244.8" rx="4.7" ry="2.3" transform="rotate(19 74.4 244.8)" fill="#bcd7a5" opacity="0.76"/><ellipse cx="19.7" cy="294.1" rx="7.6" ry="4.8" transform="rotate(47 19.7 294.1)" fill="#bcd7a5" opacity="0.61"/><ellipse cx="88.6" cy="143.9" rx="6.7" ry="3.3" transform="rotate(48 88.6 143.9)" fill="#b7d3a0" opacity="0.87"/><ellipse cx="143.1" cy="28.2" rx="5.0" ry="2.1" transform="rotate(163 143.1 28.2)" fill="#b7d3a0" opacity="0.58"/><ellipse cx="25.5" cy="301.9" rx="3.2" ry="2.9" transform="rotate(108 25.5 301.9)" fill="#c2dbac" opacity="0.86"/><ellipse cx="100.9" cy="228.6" rx="6.0" ry="4.9" transform="rotate(85 100.9 228.6)" fill="#b7d3a0" opacity="0.78"/><ellipse cx="137.2" cy="144.3" rx="6.3" ry="3.5" transform="rotate(55 137.2 144.3)" fill="#bcd7a5" opacity="0.66"/><ellipse cx="93.7" cy="186.5" rx="3.0" ry="1.6" transform="rotate(20 93.7 186.5)" fill="#b7d3a0" opacity="0.87"/><ellipse cx="55.2" cy="46.8" rx="2.2" ry="1.6" transform="rotate(125 55.2 46.8)" fill="#b7d3a0" opacity="0.52"/><ellipse cx="10.9" cy="15.4" rx="7.1" ry="4.2" transform="rotate(36 10.9 15.4)" fill="#b7d3a0" opacity="0.86"/><ellipse cx="10.6" cy="286.4" rx="7.5" ry="4.8" transform="rotate(19 10.6 286.4)" fill="#bcd7a5" opacity="0.58"/><ellipse cx="5.4" cy="313.3" rx="7.5" ry="4.1" transform="rotate(16 5.4 313.3)" fill="#b7d3a0" opacity="0.75"/><ellipse cx="76.3" cy="43.8" rx="6.8" ry="3.8" transform="rotate(53 76.3 43.8)" fill="#c2dbac" opacity="0.67"/><ellipse cx="3.3" cy="84.7" rx="3.7" ry="4.0" transform="rotate(66 3.3 84.7)" fill="#c2dbac" opacity="0.81"/><ellipse cx="96.3" cy="157.1" rx="3.7" ry="4.1" transform="rotate(142 96.3 157.1)" fill="#bcd7a5" opacity="0.67"/><ellipse cx="123.7" cy="114.4" rx="6.2" ry="3.4" transform="rotate(39 123.7 114.4)" fill="#bcd7a5" opacity="0.73"/><ellipse cx="45.9" cy="143.9" rx="5.1" ry="2.5" transform="rotate(135 45.9 143.9)" fill="#bcd7a5" opacity="0.50"/><ellipse cx="78.5" cy="162.2" rx="6.8" ry="2.1" transform="rotate(89 78.5 162.2)" fill="#c2dbac" opacity="0.88"/><ellipse cx="82.4" cy="190.7" rx="3.0" ry="4.4" transform="rotate(169 82.4 190.7)" fill="#bcd7a5" opacity="0.70"/><ellipse cx="17.6" cy="210.1" rx="2.5" ry="4.3" transform="rotate(125 17.6 210.1)" fill="#bcd7a5" opacity="0.75"/><ellipse cx="56.9" cy="132.4" rx="4.4" ry="4.6" transform="rotate(16 56.9 132.4)" fill="#b7d3a0" opacity="0.51"/><ellipse cx="33.0" cy="86.9" rx="7.4" ry="3.3" transform="rotate(68 33.0 86.9)" fill="#b7d3a0" opacity="0.59"/><ellipse cx="73.7" cy="175.4" rx="6.5" ry="4.1" transform="rotate(116 73.7 175.4)" fill="#c2dbac" opacity="0.73"/><ellipse cx="83.5" cy="286.4" rx="4.7" ry="3.4" transform="rotate(58 83.5 286.4)" fill="#c2dbac" opacity="0.68"/><ellipse cx="123.7" cy="191.1" rx="2.8" ry="3.1" transform="rotate(159 123.7 191.1)" fill="#bcd7a5" opacity="0.70"/><ellipse cx="42.8" cy="249.1" rx="7.0" ry="3.7" transform="rotate(130 42.8 249.1)" fill="#bcd7a5" opacity="0.79"/><ellipse cx="96.5" cy="115.0" rx="3.4" ry="4.8" transform="rotate(47 96.5 115.0)" fill="#b7d3a0" opacity="0.90"/><ellipse cx="26.3" cy="217.1" rx="3.2" ry="2.0" transform="rotate(27 26.3 217.1)" fill="#c2dbac" opacity="0.79"/><ellipse cx="69.6" cy="64.7" rx="5.8" ry="1.9" transform="rotate(37 69.6 64.7)" fill="#c2dbac" opacity="0.69"/><ellipse cx="2.0" cy="281.9" rx="4.6" ry="2.3" transform="rotate(177 2.0 281.9)" fill="#c2dbac" opacity="0.69"/><ellipse cx="22.7" cy="199.2" rx="4.4" ry="4.1" transform="rotate(163 22.7 199.2)" fill="#c2dbac" opacity="0.78"/><ellipse cx="94.0" cy="213.6" rx="7.1" ry="3.8" transform="rotate(117 94.0 213.6)" fill="#b7d3a0" opacity="0.78"/><ellipse cx="136.4" cy="224.3" rx="5.8" ry="3.1" transform="rotate(56 136.4 224.3)" fill="#b7d3a0" opacity="0.78"/><ellipse cx="143.2" cy="80.0" rx="4.4" ry="4.0" transform="rotate(28 143.2 80.0)" fill="#c2dbac" opacity="0.69"/><ellipse cx="3.1" cy="283.3" rx="5.1" ry="3.8" transform="rotate(157 3.1 283.3)" fill="#b7d3a0" opacity="0.63"/><ellipse cx="1.7" cy="274.5" rx="7.4" ry="1.9" transform="rotate(45 1.7 274.5)" fill="#bcd7a5" opacity="0.56"/><ellipse cx="125.1" cy="310.4" rx="5.1" ry="1.9" transform="rotate(103 125.1 310.4)" fill="#b7d3a0" opacity="0.58"/><ellipse cx="76.1" cy="5.3" rx="6.8" ry="2.8" transform="rotate(62 76.1 5.3)" fill="#b7d3a0" opacity="0.88"/><ellipse cx="33.6" cy="225.8" rx="4.4" ry="4.2" transform="rotate(22 33.6 225.8)" fill="#b7d3a0" opacity="0.64"/><ellipse cx="9.1" cy="90.5" rx="4.4" ry="1.5" transform="rotate(75 9.1 90.5)" fill="#c2dbac" opacity="0.75"/><ellipse cx="108.0" cy="191.5" rx="2.7" ry="2.6" transform="rotate(72 108.0 191.5)" fill="#b7d3a0" opacity="0.89"/><ellipse cx="159.1" cy="317.1" rx="4.8" ry="2.1" transform="rotate(167 159.1 317.1)" fill="#bcd7a5" opacity="0.82"/><ellipse cx="101.5" cy="154.8" rx="5.4" ry="2.3" transform="rotate(173 101.5 154.8)" fill="#c2dbac" opacity="0.77"/><ellipse cx="132.9" cy="262.4" rx="4.5" ry="5.0" transform="rotate(137 132.9 262.4)" fill="#b7d3a0" opacity="0.55"/><ellipse cx="133.4" cy="117.1" rx="7.1" ry="2.4" transform="rotate(68 133.4 117.1)" fill="#c2dbac" opacity="0.89"/><ellipse cx="108.6" cy="158.9" rx="6.8" ry="4.3" transform="rotate(64 108.6 158.9)" fill="#b7d3a0" opacity="0.62"/><ellipse cx="76.7" cy="141.4" rx="5.8" ry="3.8" transform="rotate(65 76.7 141.4)" fill="#c2dbac" opacity="0.84"/><ellipse cx="9.1" cy="273.2" rx="7.4" ry="4.2" transform="rotate(25 9.1 273.2)" fill="#c2dbac" opacity="0.75"/><ellipse cx="2.4" cy="3.8" rx="7.7" ry="3.8" transform="rotate(45 2.4 3.8)" fill="#bcd7a5" opacity="0.73"/><ellipse cx="136.7" cy="61.3" rx="4.7" ry="4.2" transform="rotate(38 136.7 61.3)" fill="#c2dbac" opacity="0.82"/><ellipse cx="26.9" cy="294.1" rx="5.7" ry="4.2" transform="rotate(120 26.9 294.1)" fill="#b7d3a0" opacity="0.82"/><ellipse cx="134.2" cy="65.1" rx="6.2" ry="3.4" transform="rotate(134 134.2 65.1)" fill="#c2dbac" opacity="0.77"/><ellipse cx="18.7" cy="39.1" rx="4.5" ry="4.4" transform="rotate(85 18.7 39.1)" fill="#b7d3a0" opacity="0.52"/><ellipse cx="74.7" cy="47.7" rx="4.9" ry="3.2" transform="rotate(97 74.7 47.7)" fill="#b7d3a0" opacity="0.50"/><ellipse cx="134.5" cy="154.4" rx="5.4" ry="3.8" transform="rotate(151 134.5 154.4)" fill="#c2dbac" opacity="0.67"/><ellipse cx="160.0" cy="223.1" rx="3.1" ry="2.8" transform="rotate(116 160.0 223.1)" fill="#bcd7a5" opacity="0.74"/><ellipse cx="109.2" cy="307.4" rx="4.0" ry="4.9" transform="rotate(92 109.2 307.4)" fill="#c2dbac" opacity="0.80"/><ellipse cx="23.1" cy="70.4" rx="4.5" ry="1.9" transform="rotate(17 23.1 70.4)" fill="#b7d3a0" opacity="0.65"/><ellipse cx="75.9" cy="173.4" rx="6.6" ry="2.2" transform="rotate(78 75.9 173.4)" fill="#c2dbac" opacity="0.60"/><ellipse cx="8.4" cy="95.4" rx="4.1" ry="3.2" transform="rotate(60 8.4 95.4)" fill="#c2dbac" opacity="0.85"/><ellipse cx="55.2" cy="67.2" rx="5.0" ry="1.9" transform="rotate(35 55.2 67.2)" fill="#b7d3a0" opacity="0.62"/><ellipse cx="93.8" cy="209.5" rx="6.7" ry="1.6" transform="rotate(130 93.8 209.5)" fill="#c2dbac" opacity="0.72"/><ellipse cx="8.0" cy="99.1" rx="2.0" ry="2.2" transform="rotate(166 8.0 99.1)" fill="#b7d3a0" opacity="0.81"/><ellipse cx="9.6" cy="165.3" rx="5.3" ry="2.8" transform="rotate(26 9.6 165.3)" fill="#b7d3a0" opacity="0.78"/><ellipse cx="95.4" cy="224.7" rx="3.3" ry="3.8" transform="rotate(82 95.4 224.7)" fill="#bcd7a5" opacity="0.54"/><ellipse cx="29.0" cy="12.2" rx="6.6" ry="4.7" transform="rotate(118 29.0 12.2)" fill="#c2dbac" opacity="0.85"/><ellipse cx="22.2" cy="102.1" rx="6.3" ry="4.5" transform="rotate(33 22.2 102.1)" fill="#bcd7a5" opacity="0.63"/><ellipse cx="68.9" cy="211.8" rx="7.6" ry="1.7" transform="rotate(102 68.9 211.8)" fill="#bcd7a5" opacity="0.83"/><ellipse cx="123.8" cy="139.0" rx="6.2" ry="2.9" transform="rotate(12 123.8 139.0)" fill="#b7d3a0" opacity="0.65"/><ellipse cx="94.7" cy="309.4" rx="7.9" ry="3.2" transform="rotate(74 94.7 309.4)" fill="#bcd7a5" opacity="0.53"/><ellipse cx="75.6" cy="295.6" rx="5.8" ry="3.0" transform="rotate(2 75.6 295.6)" fill="#b7d3a0" opacity="0.55"/><ellipse cx="154.6" cy="29.1" rx="7.2" ry="2.0" transform="rotate(3 154.6 29.1)" fill="#b7d3a0" opacity="0.73"/><ellipse cx="72.1" cy="245.6" rx="7.5" ry="2.8" transform="rotate(135 72.1 245.6)" fill="#b7d3a0" opacity="0.84"/><ellipse cx="116.8" cy="27.8" rx="5.8" ry="4.0" transform="rotate(83 116.8 27.8)" fill="#c2dbac" opacity="0.87"/><ellipse cx="8.4" cy="10.5" rx="2.4" ry="4.6" transform="rotate(124 8.4 10.5)" fill="#b7d3a0" opacity="0.53"/><ellipse cx="49.8" cy="240.7" rx="3.0" ry="4.5" transform="rotate(88 49.8 240.7)" fill="#bcd7a5" opacity="0.63"/><ellipse cx="151.8" cy="240.2" rx="4.8" ry="2.1" transform="rotate(174 151.8 240.2)" fill="#bcd7a5" opacity="0.65"/><ellipse cx="103.2" cy="207.8" rx="4.5" ry="2.9" transform="rotate(142 103.2 207.8)" fill="#c2dbac" opacity="0.81"/><ellipse cx="90.7" cy="96.5" rx="2.4" ry="4.9" transform="rotate(127 90.7 96.5)" fill="#b7d3a0" opacity="0.63"/><ellipse cx="96.9" cy="322.6" rx="7.0" ry="3.6" transform="rotate(56 96.9 322.6)" fill="#c2dbac" opacity="0.89"/><ellipse cx="39.4" cy="127.8" rx="4.3" ry="4.2" transform="rotate(42 39.4 127.8)" fill="#c2dbac" opacity="0.61"/><ellipse cx="0.3" cy="86.8" rx="4.5" ry="3.6" transform="rotate(147 0.3 86.8)" fill="#bcd7a5" opacity="0.62"/><ellipse cx="22.5" cy="293.9" rx="8.0" ry="2.0" transform="rotate(176 22.5 293.9)" fill="#b7d3a0" opacity="0.77"/><ellipse cx="146.2" cy="114.5" rx="2.5" ry="3.4" transform="rotate(144 146.2 114.5)" fill="#bcd7a5" opacity="0.82"/><ellipse cx="115.6" cy="324.2" rx="3.9" ry="1.7" transform="rotate(71 115.6 324.2)" fill="#b7d3a0" opacity="0.58"/><ellipse cx="40.8" cy="247.9" rx="6.7" ry="3.1" transform="rotate(16 40.8 247.9)" fill="#c2dbac" opacity="0.81"/><ellipse cx="37.3" cy="191.3" rx="7.4" ry="4.6" transform="rotate(94 37.3 191.3)" fill="#c2dbac" opacity="0.70"/><ellipse cx="32.3" cy="70.2" rx="2.6" ry="4.3" transform="rotate(52 32.3 70.2)" fill="#b7d3a0" opacity="0.73"/><ellipse cx="64.4" cy="170.7" rx="2.9" ry="1.7" transform="rotate(179 64.4 170.7)" fill="#c2dbac" opacity="0.85"/><ellipse cx="59.5" cy="152.9" rx="2.5" ry="2.6" transform="rotate(5 59.5 152.9)" fill="#c2dbac" opacity="0.71"/><ellipse cx="3.3" cy="11.1" rx="7.9" ry="4.5" transform="rotate(88 3.3 11.1)" fill="#b7d3a0" opacity="0.59"/><ellipse cx="148.1" cy="135.6" rx="3.6" ry="1.3" transform="rotate(107 148.1 135.6)" fill="#eef1e6" opacity="0.60"/><ellipse cx="6.1" cy="114.3" rx="4.1" ry="0.9" transform="rotate(9 6.1 114.3)" fill="#f1f2ea" opacity="0.85"/><ellipse cx="73.3" cy="315.7" rx="8.5" ry="0.9" transform="rotate(108 73.3 315.7)" fill="#f1f2ea" opacity="0.87"/><ellipse cx="113.0" cy="84.3" rx="4.9" ry="1.1" transform="rotate(16 113.0 84.3)" fill="#f1f2ea" opacity="0.57"/><ellipse cx="136.0" cy="160.1" rx="4.4" ry="1.7" transform="rotate(31 136.0 160.1)" fill="#f1f2ea" opacity="0.88"/><ellipse cx="9.5" cy="209.3" rx="3.2" ry="1.9" transform="rotate(46 9.5 209.3)" fill="#f1f2ea" opacity="0.52"/><ellipse cx="23.2" cy="263.8" rx="8.6" ry="1.6" transform="rotate(54 23.2 263.8)" fill="#f1f2ea" opacity="0.80"/><ellipse cx="16.9" cy="147.5" rx="4.5" ry="0.9" transform="rotate(87 16.9 147.5)" fill="#eef1e6" opacity="0.68"/><ellipse cx="129.2" cy="306.9" rx="8.4" ry="1.4" transform="rotate(164 129.2 306.9)" fill="#eef1e6" opacity="0.56"/><ellipse cx="133.3" cy="81.0" rx="6.7" ry="1.2" transform="rotate(135 133.3 81.0)" fill="#f1f2ea" opacity="0.88"/><ellipse cx="148.2" cy="164.0" rx="3.1" ry="0.9" transform="rotate(175 148.2 164.0)" fill="#f1f2ea" opacity="0.83"/><ellipse cx="76.4" cy="229.6" rx="3.9" ry="1.1" transform="rotate(10 76.4 229.6)" fill="#f1f2ea" opacity="0.72"/><ellipse cx="23.2" cy="295.1" rx="4.6" ry="1.3" transform="rotate(28 23.2 295.1)" fill="#f1f2ea" opacity="0.73"/><ellipse cx="47.4" cy="277.1" rx="4.6" ry="0.9" transform="rotate(82 47.4 277.1)" fill="#f1f2ea" opacity="0.55"/><ellipse cx="156.6" cy="75.4" rx="8.4" ry="1.6" transform="rotate(38 156.6 75.4)" fill="#f1f2ea" opacity="0.83"/><ellipse cx="19.1" cy="263.8" rx="8.8" ry="1.3" transform="rotate(47 19.1 263.8)" fill="#eef1e6" opacity="0.87"/><ellipse cx="15.6" cy="138.1" rx="8.4" ry="0.9" transform="rotate(131 15.6 138.1)" fill="#f1f2ea" opacity="0.56"/><ellipse cx="102.4" cy="179.4" rx="6.0" ry="1.4" transform="rotate(80 102.4 179.4)" fill="#f1f2ea" opacity="0.57"/><ellipse cx="69.6" cy="306.2" rx="4.3" ry="1.5" transform="rotate(25 69.6 306.2)" fill="#eef1e6" opacity="0.71"/><ellipse cx="36.9" cy="107.4" rx="6.6" ry="1.8" transform="rotate(160 36.9 107.4)" fill="#f1f2ea" opacity="0.80"/><ellipse cx="28.1" cy="97.0" rx="7.0" ry="1.6" transform="rotate(35 28.1 97.0)" fill="#f1f2ea" opacity="0.58"/><ellipse cx="10.5" cy="257.8" rx="5.4" ry="1.7" transform="rotate(10 10.5 257.8)" fill="#f1f2ea" opacity="0.63"/><ellipse cx="134.7" cy="293.4" rx="6.0" ry="0.8" transform="rotate(164 134.7 293.4)" fill="#f1f2ea" opacity="0.55"/><ellipse cx="106.5" cy="127.1" rx="6.4" ry="2.0" transform="rotate(7 106.5 127.1)" fill="#f1f2ea" opacity="0.73"/><ellipse cx="137.3" cy="156.2" rx="8.6" ry="2.0" transform="rotate(13 137.3 156.2)" fill="#f1f2ea" opacity="0.79"/><ellipse cx="130.6" cy="293.7" rx="4.9" ry="1.7" transform="rotate(69 130.6 293.7)" fill="#eef1e6" opacity="0.62"/><ellipse cx="17.2" cy="257.4" rx="5.7" ry="0.8" transform="rotate(145 17.2 257.4)" fill="#eef1e6" opacity="0.51"/><ellipse cx="154.8" cy="120.4" rx="4.1" ry="0.9" transform="rotate(45 154.8 120.4)" fill="#eef1e6" opacity="0.51"/><ellipse cx="148.2" cy="259.5" rx="4.6" ry="1.8" transform="rotate(115 148.2 259.5)" fill="#f1f2ea" opacity="0.71"/><ellipse cx="112.4" cy="87.8" rx="8.2" ry="1.7" transform="rotate(8 112.4 87.8)" fill="#eef1e6" opacity="0.69"/><ellipse cx="93.7" cy="265.6" rx="3.7" ry="0.9" transform="rotate(159 93.7 265.6)" fill="#eef1e6" opacity="0.84"/><ellipse cx="23.6" cy="214.7" rx="7.5" ry="1.0" transform="rotate(149 23.6 214.7)" fill="#f1f2ea" opacity="0.78"/><ellipse cx="95.5" cy="222.8" rx="3.2" ry="2.0" transform="rotate(9 95.5 222.8)" fill="#f1f2ea" opacity="0.64"/><ellipse cx="38.5" cy="150.5" rx="5.6" ry="2.0" transform="rotate(145 38.5 150.5)" fill="#f1f2ea" opacity="0.83"/><ellipse cx="135.6" cy="74.5" rx="6.1" ry="1.9" transform="rotate(168 135.6 74.5)" fill="#eef1e6" opacity="0.85"/><ellipse cx="106.1" cy="63.1" rx="3.7" ry="1.0" transform="rotate(58 106.1 63.1)" fill="#eef1e6" opacity="0.70"/><ellipse cx="3.3" cy="97.6" rx="8.8" ry="1.7" transform="rotate(169 3.3 97.6)" fill="#eef1e6" opacity="0.82"/><ellipse cx="141.5" cy="298.9" rx="3.2" ry="1.6" transform="rotate(48 141.5 298.9)" fill="#f1f2ea" opacity="0.75"/><ellipse cx="129.0" cy="69.7" rx="3.6" ry="0.9" transform="rotate(2 129.0 69.7)" fill="#eef1e6" opacity="0.88"/><ellipse cx="46.0" cy="142.5" rx="6.9" ry="0.9" transform="rotate(107 46.0 142.5)" fill="#f1f2ea" opacity="0.53"/><ellipse cx="94.4" cy="311.6" rx="5.6" ry="1.4" transform="rotate(159 94.4 311.6)" fill="#f1f2ea" opacity="0.73"/><ellipse cx="43.9" cy="258.7" rx="7.4" ry="1.1" transform="rotate(82 43.9 258.7)" fill="#eef1e6" opacity="0.76"/><ellipse cx="32.2" cy="251.8" rx="5.8" ry="1.5" transform="rotate(110 32.2 251.8)" fill="#f1f2ea" opacity="0.83"/><ellipse cx="5.0" cy="150.1" rx="4.1" ry="1.5" transform="rotate(175 5.0 150.1)" fill="#f1f2ea" opacity="0.50"/><ellipse cx="56.4" cy="292.7" rx="4.4" ry="1.5" transform="rotate(88 56.4 292.7)" fill="#f1f2ea" opacity="0.85"/><ellipse cx="34.6" cy="75.4" rx="3.1" ry="1.5" transform="rotate(109 34.6 75.4)" fill="#f1f2ea" opacity="0.68"/><ellipse cx="9.9" cy="164.7" rx="5.6" ry="1.7" transform="rotate(20 9.9 164.7)" fill="#eef1e6" opacity="0.90"/><ellipse cx="108.4" cy="312.2" rx="5.5" ry="1.6" transform="rotate(25 108.4 312.2)" fill="#eef1e6" opacity="0.75"/><ellipse cx="136.0" cy="281.7" rx="6.1" ry="1.7" transform="rotate(134 136.0 281.7)" fill="#f1f2ea" opacity="0.61"/><ellipse cx="100.9" cy="230.7" rx="7.2" ry="1.3" transform="rotate(19 100.9 230.7)" fill="#f1f2ea" opacity="0.81"/><ellipse cx="93.7" cy="194.4" rx="8.8" ry="1.5" transform="rotate(75 93.7 194.4)" fill="#f1f2ea" opacity="0.85"/><ellipse cx="97.2" cy="162.5" rx="5.7" ry="1.3" transform="rotate(130 97.2 162.5)" fill="#f1f2ea" opacity="0.64"/><ellipse cx="84.2" cy="220.8" rx="6.9" ry="0.8" transform="rotate(134 84.2 220.8)" fill="#f1f2ea" opacity="0.65"/><ellipse cx="48.0" cy="205.0" rx="7.8" ry="1.3" transform="rotate(68 48.0 205.0)" fill="#eef1e6" opacity="0.54"/><ellipse cx="147.2" cy="147.4" rx="8.1" ry="1.8" transform="rotate(173 147.2 147.4)" fill="#eef1e6" opacity="0.89"/><ellipse cx="142.6" cy="318.1" rx="3.2" ry="1.1" transform="rotate(161 142.6 318.1)" fill="#f1f2ea" opacity="0.87"/><ellipse cx="123.8" cy="205.4" rx="9.0" ry="1.4" transform="rotate(93 123.8 205.4)" fill="#f1f2ea" opacity="0.66"/><ellipse cx="57.2" cy="220.6" rx="5.1" ry="1.9" transform="rotate(122 57.2 220.6)" fill="#eef1e6" opacity="0.54"/><ellipse cx="59.9" cy="168.2" rx="6.4" ry="1.5" transform="rotate(158 59.9 168.2)" fill="#f1f2ea" opacity="0.69"/><ellipse cx="70.4" cy="228.6" rx="9.0" ry="1.2" transform="rotate(95 70.4 228.6)" fill="#eef1e6" opacity="0.57"/><ellipse cx="50.9" cy="324.2" rx="8.0" ry="1.4" transform="rotate(20 50.9 324.2)" fill="#f1f2ea" opacity="0.78"/><ellipse cx="131.3" cy="327.4" rx="8.3" ry="1.3" transform="rotate(28 131.3 327.4)" fill="#f1f2ea" opacity="0.83"/><ellipse cx="33.2" cy="301.1" rx="5.5" ry="0.9" transform="rotate(102 33.2 301.1)" fill="#eef1e6" opacity="0.64"/><ellipse cx="159.0" cy="231.9" rx="3.3" ry="1.3" transform="rotate(142 159.0 231.9)" fill="#f1f2ea" opacity="0.78"/><ellipse cx="88.5" cy="307.6" rx="5.4" ry="0.9" transform="rotate(3 88.5 307.6)" fill="#eef1e6" opacity="0.58"/><ellipse cx="79.7" cy="209.4" rx="4.6" ry="1.6" transform="rotate(96 79.7 209.4)" fill="#eef1e6" opacity="0.73"/><ellipse cx="65.8" cy="92.8" rx="3.9" ry="1.7" transform="rotate(19 65.8 92.8)" fill="#eef1e6" opacity="0.53"/><ellipse cx="151.7" cy="192.4" rx="5.8" ry="1.3" transform="rotate(144 151.7 192.4)" fill="#eef1e6" opacity="0.77"/><ellipse cx="92.6" cy="98.9" rx="4.4" ry="1.1" transform="rotate(6 92.6 98.9)" fill="#eef1e6" opacity="0.84"/><ellipse cx="151.6" cy="77.0" rx="4.1" ry="1.5" transform="rotate(4 151.6 77.0)" fill="#eef1e6" opacity="0.86"/><ellipse cx="93.2" cy="319.1" rx="5.6" ry="1.5" transform="rotate(45 93.2 319.1)" fill="#eef1e6" opacity="0.56"/><ellipse cx="93.9" cy="106.9" rx="3.0" ry="1.8" transform="rotate(82 93.9 106.9)" fill="#f1f2ea" opacity="0.74"/><ellipse cx="153.6" cy="193.8" rx="8.7" ry="1.1" transform="rotate(70 153.6 193.8)" fill="#eef1e6" opacity="0.67"/><ellipse cx="63.8" cy="252.2" rx="3.1" ry="1.8" transform="rotate(16 63.8 252.2)" fill="#eef1e6" opacity="0.64"/><ellipse cx="29.8" cy="322.3" rx="4.7" ry="1.5" transform="rotate(21 29.8 322.3)" fill="#f1f2ea" opacity="0.63"/><ellipse cx="104.2" cy="319.5" rx="5.5" ry="1.9" transform="rotate(100 104.2 319.5)" fill="#f1f2ea" opacity="0.58"/><ellipse cx="45.4" cy="124.0" rx="3.2" ry="1.6" transform="rotate(61 45.4 124.0)" fill="#eef1e6" opacity="0.60"/><ellipse cx="20.8" cy="113.0" rx="6.3" ry="1.7" transform="rotate(100 20.8 113.0)" fill="#f1f2ea" opacity="0.83"/><ellipse cx="128.8" cy="103.0" rx="5.1" ry="1.7" transform="rotate(68 128.8 103.0)" fill="#eef1e6" opacity="0.62"/><ellipse cx="76.2" cy="115.2" rx="8.2" ry="1.6" transform="rotate(170 76.2 115.2)" fill="#f1f2ea" opacity="0.74"/><ellipse cx="70.5" cy="327.3" rx="6.2" ry="1.3" transform="rotate(92 70.5 327.3)" fill="#eef1e6" opacity="0.85"/><ellipse cx="19.6" cy="198.5" rx="6.3" ry="1.1" transform="rotate(139 19.6 198.5)" fill="#f1f2ea" opacity="0.51"/><ellipse cx="114.9" cy="99.2" rx="3.1" ry="1.7" transform="rotate(125 114.9 99.2)" fill="#eef1e6" opacity="0.63"/><ellipse cx="106.0" cy="89.4" rx="6.4" ry="1.2" transform="rotate(90 106.0 89.4)" fill="#f1f2ea" opacity="0.58"/><ellipse cx="115.0" cy="83.7" rx="4.7" ry="1.8" transform="rotate(72 115.0 83.7)" fill="#f1f2ea" opacity="0.66"/><ellipse cx="145.4" cy="269.2" rx="8.3" ry="1.8" transform="rotate(24 145.4 269.2)" fill="#f1f2ea" opacity="0.57"/><ellipse cx="58.7" cy="275.8" rx="7.1" ry="1.9" transform="rotate(5 58.7 275.8)" fill="#f1f2ea" opacity="0.60"/><ellipse cx="135.5" cy="155.1" rx="6.8" ry="1.0" transform="rotate(21 135.5 155.1)" fill="#eef1e6" opacity="0.79"/><ellipse cx="6.5" cy="70.8" rx="4.0" ry="1.0" transform="rotate(55 6.5 70.8)" fill="#f1f2ea" opacity="0.80"/><ellipse cx="88.4" cy="230.0" rx="8.6" ry="1.5" transform="rotate(41 88.4 230.0)" fill="#f1f2ea" opacity="0.79"/><ellipse cx="40.8" cy="177.4" rx="7.1" ry="1.2" transform="rotate(0 40.8 177.4)" fill="#f1f2ea" opacity="0.86"/><ellipse cx="140.0" cy="218.0" rx="7.2" ry="2.0" transform="rotate(123 140.0 218.0)" fill="#eef1e6" opacity="0.82"/><ellipse cx="33.6" cy="306.9" rx="7.5" ry="0.9" transform="rotate(125 33.6 306.9)" fill="#f1f2ea" opacity="0.90"/><ellipse cx="98.5" cy="119.6" rx="6.2" ry="1.2" transform="rotate(171 98.5 119.6)" fill="#f1f2ea" opacity="0.87"/><ellipse cx="110.7" cy="259.4" rx="8.0" ry="1.6" transform="rotate(82 110.7 259.4)" fill="#eef1e6" opacity="0.77"/><ellipse cx="33.0" cy="241.7" rx="8.1" ry="1.7" transform="rotate(88 33.0 241.7)" fill="#eef1e6" opacity="0.52"/><ellipse cx="112.4" cy="277.5" rx="4.6" ry="1.5" transform="rotate(174 112.4 277.5)" fill="#eef1e6" opacity="0.72"/><ellipse cx="40.0" cy="76.0" rx="5.1" ry="1.3" transform="rotate(36 40.0 76.0)" fill="#f1f2ea" opacity="0.55"/><ellipse cx="109.8" cy="191.3" rx="5.9" ry="1.6" transform="rotate(1 109.8 191.3)" fill="#f1f2ea" opacity="0.55"/><ellipse cx="102.5" cy="248.5" rx="3.8" ry="1.6" transform="rotate(106 102.5 248.5)" fill="#eef1e6" opacity="0.63"/><ellipse cx="130.5" cy="208.0" rx="7.6" ry="1.0" transform="rotate(120 130.5 208.0)" fill="#f1f2ea" opacity="0.84"/><ellipse cx="65.0" cy="115.7" rx="7.1" ry="0.8" transform="rotate(88 65.0 115.7)" fill="#eef1e6" opacity="0.52"/><ellipse cx="44.9" cy="113.2" rx="7.2" ry="1.3" transform="rotate(20 44.9 113.2)" fill="#f1f2ea" opacity="0.68"/><ellipse cx="91.1" cy="138.2" rx="6.3" ry="0.9" transform="rotate(84 91.1 138.2)" fill="#f1f2ea" opacity="0.53"/><ellipse cx="114.7" cy="324.7" rx="6.4" ry="0.9" transform="rotate(88 114.7 324.7)" fill="#f1f2ea" opacity="0.70"/><ellipse cx="125.4" cy="146.9" rx="5.2" ry="0.9" transform="rotate(51 125.4 146.9)" fill="#f1f2ea" opacity="0.76"/><ellipse cx="12.5" cy="261.8" rx="3.2" ry="1.3" transform="rotate(26 12.5 261.8)" fill="#f1f2ea" opacity="0.57"/><ellipse cx="102.1" cy="288.3" rx="8.6" ry="1.0" transform="rotate(141 102.1 288.3)" fill="#f1f2ea" opacity="0.80"/><ellipse cx="52.3" cy="109.8" rx="8.0" ry="1.2" transform="rotate(66 52.3 109.8)" fill="#f1f2ea" opacity="0.84"/><ellipse cx="40.6" cy="75.6" rx="3.6" ry="1.8" transform="rotate(166 40.6 75.6)" fill="#f1f2ea" opacity="0.86"/><ellipse cx="151.2" cy="193.5" rx="6.0" ry="1.0" transform="rotate(54 151.2 193.5)" fill="#eef1e6" opacity="0.56"/><ellipse cx="36.4" cy="97.3" rx="6.8" ry="1.3" transform="rotate(176 36.4 97.3)" fill="#f1f2ea" opacity="0.69"/><ellipse cx="34.9" cy="160.6" rx="3.2" ry="1.5" transform="rotate(150 34.9 160.6)" fill="#f1f2ea" opacity="0.56"/><ellipse cx="11.5" cy="74.9" rx="7.3" ry="1.9" transform="rotate(11 11.5 74.9)" fill="#eef1e6" opacity="0.77"/><ellipse cx="132.2" cy="304.1" rx="4.0" ry="1.2" transform="rotate(80 132.2 304.1)" fill="#f1f2ea" opacity="0.73"/><ellipse cx="75.0" cy="206.5" rx="6.1" ry="1.3" transform="rotate(96 75.0 206.5)" fill="#eef1e6" opacity="0.89"/><ellipse cx="153.9" cy="227.4" rx="7.9" ry="0.9" transform="rotate(122 153.9 227.4)" fill="#f1f2ea" opacity="0.73"/><ellipse cx="67.4" cy="159.5" rx="6.9" ry="1.0" transform="rotate(156 67.4 159.5)" fill="#eef1e6" opacity="0.84"/><ellipse cx="35.6" cy="259.7" rx="7.1" ry="1.0" transform="rotate(104 35.6 259.7)" fill="#f1f2ea" opacity="0.64"/><ellipse cx="38.4" cy="179.2" rx="4.6" ry="1.1" transform="rotate(174 38.4 179.2)" fill="#eef1e6" opacity="0.72"/><ellipse cx="18.0" cy="442.1" rx="2.4" ry="1.2" transform="rotate(96 18.0 442.1)" fill="#c2dbac" opacity="0.78"/><ellipse cx="36.3" cy="389.6" rx="3.4" ry="2.7" transform="rotate(132 36.3 389.6)" fill="#b7d3a0" opacity="0.73"/><ellipse cx="136.2" cy="418.3" rx="4.3" ry="1.3" transform="rotate(91 136.2 418.3)" fill="#b7d3a0" opacity="0.79"/><ellipse cx="121.1" cy="344.9" rx="5.0" ry="2.8" transform="rotate(18 121.1 344.9)" fill="#b7d3a0" opacity="0.66"/><ellipse cx="27.4" cy="454.8" rx="3.5" ry="2.9" transform="rotate(25 27.4 454.8)" fill="#b7d3a0" opacity="0.52"/><ellipse cx="37.9" cy="378.4" rx="1.6" ry="2.5" transform="rotate(38 37.9 378.4)" fill="#c2dbac" opacity="0.55"/><ellipse cx="21.7" cy="448.1" rx="1.8" ry="3.5" transform="rotate(36 21.7 448.1)" fill="#bcd7a5" opacity="0.87"/><ellipse cx="139.3" cy="351.8" rx="4.1" ry="1.9" transform="rotate(137 139.3 351.8)" fill="#b7d3a0" opacity="0.50"/><ellipse cx="40.9" cy="361.1" rx="3.3" ry="2.3" transform="rotate(64 40.9 361.1)" fill="#c2dbac" opacity="0.52"/><ellipse cx="96.6" cy="343.0" rx="3.4" ry="3.0" transform="rotate(20 96.6 343.0)" fill="#b7d3a0" opacity="0.60"/><ellipse cx="56.7" cy="420.2" rx="1.6" ry="3.5" transform="rotate(79 56.7 420.2)" fill="#bcd7a5" opacity="0.70"/><ellipse cx="11.8" cy="363.6" rx="2.0" ry="3.3" transform="rotate(157 11.8 363.6)" fill="#b7d3a0" opacity="0.65"/><ellipse cx="23.1" cy="443.8" rx="3.4" ry="2.7" transform="rotate(145 23.1 443.8)" fill="#c2dbac" opacity="0.51"/><ellipse cx="54.8" cy="349.6" rx="3.3" ry="3.2" transform="rotate(144 54.8 349.6)" fill="#bcd7a5" opacity="0.53"/><ellipse cx="99.3" cy="413.8" rx="3.6" ry="3.1" transform="rotate(174 99.3 413.8)" fill="#b7d3a0" opacity="0.84"/><ellipse cx="62.9" cy="443.5" rx="3.6" ry="1.2" transform="rotate(59 62.9 443.5)" fill="#bcd7a5" opacity="0.62"/><ellipse cx="20.9" cy="411.2" rx="2.2" ry="3.0" transform="rotate(131 20.9 411.2)" fill="#c2dbac" opacity="0.73"/><ellipse cx="62.1" cy="376.0" rx="1.5" ry="2.4" transform="rotate(60 62.1 376.0)" fill="#bcd7a5" opacity="0.60"/><ellipse cx="140.2" cy="409.1" rx="3.7" ry="2.8" transform="rotate(26 140.2 409.1)" fill="#c2dbac" opacity="0.61"/><ellipse cx="80.0" cy="364.1" rx="3.5" ry="2.3" transform="rotate(172 80.0 364.1)" fill="#b7d3a0" opacity="0.51"/><ellipse cx="89.7" cy="430.2" rx="4.6" ry="2.9" transform="rotate(114 89.7 430.2)" fill="#b7d3a0" opacity="0.54"/><ellipse cx="126.7" cy="433.1" rx="2.3" ry="3.0" transform="rotate(25 126.7 433.1)" fill="#bcd7a5" opacity="0.62"/><ellipse cx="122.1" cy="426.1" rx="3.3" ry="2.6" transform="rotate(63 122.1 426.1)" fill="#b7d3a0" opacity="0.79"/><ellipse cx="53.5" cy="421.5" rx="3.9" ry="3.2" transform="rotate(141 53.5 421.5)" fill="#b7d3a0" opacity="0.65"/><ellipse cx="38.9" cy="360.5" rx="2.7" ry="1.3" transform="rotate(1 38.9 360.5)" fill="#b7d3a0" opacity="0.68"/><ellipse cx="71.3" cy="403.9" rx="2.6" ry="1.4" transform="rotate(12 71.3 403.9)" fill="#c2dbac" opacity="0.79"/><ellipse cx="40.3" cy="404.3" rx="3.8" ry="3.4" transform="rotate(13 40.3 404.3)" fill="#bcd7a5" opacity="0.73"/><ellipse cx="12.8" cy="353.2" rx="3.5" ry="3.5" transform="rotate(64 12.8 353.2)" fill="#b7d3a0" opacity="0.67"/><ellipse cx="138.9" cy="338.8" rx="3.2" ry="3.2" transform="rotate(50 138.9 338.8)" fill="#c2dbac" opacity="0.72"/><ellipse cx="121.4" cy="411.4" rx="2.3" ry="1.1" transform="rotate(9 121.4 411.4)" fill="#c2dbac" opacity="0.58"/><ellipse cx="96.5" cy="442.3" rx="3.8" ry="1.5" transform="rotate(132 96.5 442.3)" fill="#bcd7a5" opacity="0.74"/><ellipse cx="12.7" cy="435.2" rx="4.6" ry="1.9" transform="rotate(25 12.7 435.2)" fill="#bcd7a5" opacity="0.61"/><ellipse cx="102.8" cy="332.0" rx="2.6" ry="1.1" transform="rotate(58 102.8 332.0)" fill="#b7d3a0" opacity="0.51"/><ellipse cx="77.8" cy="409.3" rx="4.3" ry="1.4" transform="rotate(155 77.8 409.3)" fill="#bcd7a5" opacity="0.53"/><ellipse cx="98.0" cy="430.9" rx="5.0" ry="2.0" transform="rotate(169 98.0 430.9)" fill="#bcd7a5" opacity="0.51"/><ellipse cx="50.7" cy="415.0" rx="2.6" ry="2.0" transform="rotate(128 50.7 415.0)" fill="#c2dbac" opacity="0.56"/><ellipse cx="3.0" cy="357.4" rx="3.4" ry="3.1" transform="rotate(64 3.0 357.4)" fill="#c2dbac" opacity="0.67"/><ellipse cx="86.2" cy="406.5" rx="3.4" ry="2.6" transform="rotate(108 86.2 406.5)" fill="#c2dbac" opacity="0.59"/><ellipse cx="99.0" cy="435.7" rx="3.2" ry="1.1" transform="rotate(117 99.0 435.7)" fill="#b7d3a0" opacity="0.81"/><ellipse cx="156.4" cy="388.9" rx="2.5" ry="2.3" transform="rotate(169 156.4 388.9)" fill="#bcd7a5" opacity="0.60"/><ellipse cx="89.3" cy="343.0" rx="4.3" ry="3.4" transform="rotate(27 89.3 343.0)" fill="#b7d3a0" opacity="0.59"/><ellipse cx="121.1" cy="341.7" rx="1.6" ry="1.3" transform="rotate(11 121.1 341.7)" fill="#b7d3a0" opacity="0.58"/><ellipse cx="124.4" cy="363.7" rx="3.6" ry="2.8" transform="rotate(163 124.4 363.7)" fill="#b7d3a0" opacity="0.84"/><ellipse cx="124.7" cy="398.7" rx="2.7" ry="2.8" transform="rotate(79 124.7 398.7)" fill="#c2dbac" opacity="0.59"/><ellipse cx="146.0" cy="447.1" rx="2.9" ry="1.5" transform="rotate(142 146.0 447.1)" fill="#bcd7a5" opacity="0.54"/><ellipse cx="117.3" cy="338.5" rx="3.8" ry="2.0" transform="rotate(156 117.3 338.5)" fill="#bcd7a5" opacity="0.59"/><ellipse cx="60.2" cy="447.9" rx="2.8" ry="2.6" transform="rotate(155 60.2 447.9)" fill="#bcd7a5" opacity="0.60"/><ellipse cx="42.0" cy="386.4" rx="2.3" ry="1.5" transform="rotate(137 42.0 386.4)" fill="#b7d3a0" opacity="0.61"/><ellipse cx="140.7" cy="394.8" rx="4.9" ry="3.0" transform="rotate(86 140.7 394.8)" fill="#c2dbac" opacity="0.88"/><ellipse cx="21.8" cy="369.0" rx="1.8" ry="1.0" transform="rotate(157 21.8 369.0)" fill="#bcd7a5" opacity="0.56"/><ellipse cx="109.2" cy="407.7" rx="3.1" ry="2.4" transform="rotate(159 109.2 407.7)" fill="#bcd7a5" opacity="0.84"/><ellipse cx="117.7" cy="336.0" rx="4.2" ry="2.1" transform="rotate(78 117.7 336.0)" fill="#bcd7a5" opacity="0.90"/><ellipse cx="47.6" cy="333.2" rx="1.9" ry="3.4" transform="rotate(2 47.6 333.2)" fill="#c2dbac" opacity="0.56"/><ellipse cx="117.8" cy="342.7" rx="2.1" ry="2.7" transform="rotate(16 117.8 342.7)" fill="#c2dbac" opacity="0.76"/><ellipse cx="106.5" cy="381.6" rx="2.7" ry="3.2" transform="rotate(105 106.5 381.6)" fill="#bcd7a5" opacity="0.82"/><ellipse cx="110.3" cy="334.9" rx="3.3" ry="1.6" transform="rotate(77 110.3 334.9)" fill="#bcd7a5" opacity="0.79"/><ellipse cx="7.7" cy="446.2" rx="1.7" ry="1.3" transform="rotate(172 7.7 446.2)" fill="#bcd7a5" opacity="0.71"/><ellipse cx="0.4" cy="359.1" rx="3.4" ry="2.6" transform="rotate(98 0.4 359.1)" fill="#bcd7a5" opacity="0.71"/><ellipse cx="134.3" cy="454.4" rx="1.8" ry="3.4" transform="rotate(154 134.3 454.4)" fill="#bcd7a5" opacity="0.79"/><ellipse cx="43.7" cy="353.0" rx="2.4" ry="1.2" transform="rotate(8 43.7 353.0)" fill="#b7d3a0" opacity="0.52"/><ellipse cx="126.3" cy="453.8" rx="2.4" ry="1.8" transform="rotate(7 126.3 453.8)" fill="#c2dbac" opacity="0.72"/><ellipse cx="87.8" cy="419.7" rx="4.9" ry="3.2" transform="rotate(129 87.8 419.7)" fill="#c2dbac" opacity="0.67"/><ellipse cx="86.4" cy="379.8" rx="2.0" ry="2.9" transform="rotate(159 86.4 379.8)" fill="#bcd7a5" opacity="0.86"/><ellipse cx="101.6" cy="361.1" rx="3.3" ry="3.5" transform="rotate(125 101.6 361.1)" fill="#b7d3a0" opacity="0.65"/><ellipse cx="38.5" cy="355.8" rx="1.9" ry="3.1" transform="rotate(141 38.5 355.8)" fill="#b7d3a0" opacity="0.52"/><ellipse cx="111.1" cy="372.2" rx="3.8" ry="2.4" transform="rotate(57 111.1 372.2)" fill="#b7d3a0" opacity="0.50"/><ellipse cx="119.4" cy="441.0" rx="3.3" ry="2.5" transform="rotate(179 119.4 441.0)" fill="#bcd7a5" opacity="0.83"/><ellipse cx="126.6" cy="443.0" rx="2.7" ry="1.2" transform="rotate(176 126.6 443.0)" fill="#c2dbac" opacity="0.75"/><ellipse cx="108.4" cy="371.9" rx="3.7" ry="2.4" transform="rotate(40 108.4 371.9)" fill="#b7d3a0" opacity="0.81"/><ellipse cx="42.0" cy="439.3" rx="4.5" ry="1.9" transform="rotate(106 42.0 439.3)" fill="#b7d3a0" opacity="0.59"/><ellipse cx="22.7" cy="450.6" rx="5.6" ry="1.3" transform="rotate(95 22.7 450.6)" fill="#f1f2ea" opacity="0.60"/><ellipse cx="27.6" cy="436.8" rx="5.3" ry="1.4" transform="rotate(149 27.6 436.8)" fill="#eef1e6" opacity="0.63"/><ellipse cx="57.9" cy="442.3" rx="5.1" ry="1.2" transform="rotate(126 57.9 442.3)" fill="#f1f2ea" opacity="0.54"/><ellipse cx="57.1" cy="434.4" rx="5.6" ry="1.3" transform="rotate(16 57.1 434.4)" fill="#f1f2ea" opacity="0.62"/><ellipse cx="71.4" cy="344.5" rx="6.2" ry="1.5" transform="rotate(31 71.4 344.5)" fill="#eef1e6" opacity="0.50"/><ellipse cx="20.9" cy="393.5" rx="6.3" ry="1.4" transform="rotate(94 20.9 393.5)" fill="#f1f2ea" opacity="0.60"/><ellipse cx="89.0" cy="330.1" rx="4.3" ry="1.4" transform="rotate(55 89.0 330.1)" fill="#f1f2ea" opacity="0.87"/><ellipse cx="40.9" cy="364.5" rx="5.2" ry="1.3" transform="rotate(89 40.9 364.5)" fill="#eef1e6" opacity="0.58"/><ellipse cx="67.7" cy="433.0" rx="6.1" ry="1.2" transform="rotate(8 67.7 433.0)" fill="#f1f2ea" opacity="0.65"/><ellipse cx="6.7" cy="427.9" rx="7.8" ry="1.2" transform="rotate(109 6.7 427.9)" fill="#f1f2ea" opacity="0.64"/><ellipse cx="61.7" cy="405.2" rx="7.6" ry="1.0" transform="rotate(175 61.7 405.2)" fill="#f1f2ea" opacity="0.53"/><ellipse cx="32.5" cy="441.8" rx="3.4" ry="1.2" transform="rotate(71 32.5 441.8)" fill="#f1f2ea" opacity="0.70"/><ellipse cx="144.2" cy="428.4" rx="3.1" ry="1.4" transform="rotate(83 144.2 428.4)" fill="#f1f2ea" opacity="0.78"/><ellipse cx="69.8" cy="459.3" rx="3.9" ry="0.9" transform="rotate(72 69.8 459.3)" fill="#eef1e6" opacity="0.70"/><ellipse cx="131.9" cy="417.1" rx="6.7" ry="1.2" transform="rotate(7 131.9 417.1)" fill="#f1f2ea" opacity="0.72"/><ellipse cx="123.1" cy="430.1" rx="3.6" ry="1.0" transform="rotate(14 123.1 430.1)" fill="#eef1e6" opacity="0.54"/><ellipse cx="14.1" cy="427.9" rx="5.8" ry="0.9" transform="rotate(123 14.1 427.9)" fill="#f1f2ea" opacity="0.69"/><ellipse cx="8.8" cy="419.8" rx="5.1" ry="1.4" transform="rotate(180 8.8 419.8)" fill="#eef1e6" opacity="0.85"/><ellipse cx="23.3" cy="373.5" rx="5.6" ry="0.8" transform="rotate(178 23.3 373.5)" fill="#f1f2ea" opacity="0.71"/><ellipse cx="13.9" cy="379.9" rx="6.3" ry="1.1" transform="rotate(71 13.9 379.9)" fill="#f1f2ea" opacity="0.77"/><ellipse cx="49.1" cy="362.3" rx="4.9" ry="1.2" transform="rotate(97 49.1 362.3)" fill="#f1f2ea" opacity="0.58"/><ellipse cx="8.3" cy="399.8" rx="4.9" ry="1.3" transform="rotate(88 8.3 399.8)" fill="#eef1e6" opacity="0.65"/><ellipse cx="128.2" cy="356.0" rx="7.6" ry="1.4" transform="rotate(9 128.2 356.0)" fill="#f1f2ea" opacity="0.50"/><ellipse cx="10.8" cy="453.7" rx="7.1" ry="0.8" transform="rotate(40 10.8 453.7)" fill="#f1f2ea" opacity="0.62"/><ellipse cx="113.7" cy="434.3" rx="6.0" ry="1.3" transform="rotate(168 113.7 434.3)" fill="#f1f2ea" opacity="0.58"/><ellipse cx="32.5" cy="353.4" rx="7.3" ry="0.9" transform="rotate(25 32.5 353.4)" fill="#eef1e6" opacity="0.83"/><ellipse cx="79.5" cy="331.8" rx="6.6" ry="1.5" transform="rotate(30 79.5 331.8)" fill="#eef1e6" opacity="0.77"/><ellipse cx="108.0" cy="368.3" rx="4.1" ry="1.6" transform="rotate(26 108.0 368.3)" fill="#eef1e6" opacity="0.71"/><ellipse cx="74.5" cy="356.2" rx="3.5" ry="0.9" transform="rotate(40 74.5 356.2)" fill="#f1f2ea" opacity="0.78"/><ellipse cx="70.8" cy="385.2" rx="7.3" ry="1.7" transform="rotate(24 70.8 385.2)" fill="#eef1e6" opacity="0.83"/><ellipse cx="47.0" cy="360.2" rx="5.9" ry="1.1" transform="rotate(101 47.0 360.2)" fill="#eef1e6" opacity="0.62"/><ellipse cx="41.3" cy="401.3" rx="4.1" ry="1.7" transform="rotate(120 41.3 401.3)" fill="#eef1e6" opacity="0.66"/><ellipse cx="5.3" cy="379.4" rx="6.2" ry="1.0" transform="rotate(98 5.3 379.4)" fill="#eef1e6" opacity="0.58"/><ellipse cx="23.8" cy="353.9" rx="4.7" ry="1.2" transform="rotate(7 23.8 353.9)" fill="#f1f2ea" opacity="0.55"/><ellipse cx="147.7" cy="459.5" rx="7.7" ry="1.3" transform="rotate(52 147.7 459.5)" fill="#f1f2ea" opacity="0.51"/><ellipse cx="125.0" cy="445.6" rx="7.6" ry="1.0" transform="rotate(50 125.0 445.6)" fill="#f1f2ea" opacity="0.74"/><ellipse cx="86.5" cy="341.5" rx="3.7" ry="1.1" transform="rotate(161 86.5 341.5)" fill="#eef1e6" opacity="0.73"/><ellipse cx="48.0" cy="405.4" rx="3.5" ry="0.8" transform="rotate(35 48.0 405.4)" fill="#eef1e6" opacity="0.76"/><ellipse cx="8.0" cy="373.3" rx="5.2" ry="1.0" transform="rotate(134 8.0 373.3)" fill="#eef1e6" opacity="0.54"/><ellipse cx="133.1" cy="435.2" rx="6.6" ry="1.3" transform="rotate(134 133.1 435.2)" fill="#eef1e6" opacity="0.82"/><ellipse cx="35.7" cy="666.1" rx="2.2" ry="2.8" transform="rotate(18 35.7 666.1)" fill="#b7d3a0" opacity="0.78"/><ellipse cx="24.9" cy="703.7" rx="2.4" ry="3.3" transform="rotate(132 24.9 703.7)" fill="#c2dbac" opacity="0.57"/><ellipse cx="56.5" cy="653.2" rx="6.2" ry="3.7" transform="rotate(86 56.5 653.2)" fill="#bcd7a5" opacity="0.60"/><ellipse cx="6.4" cy="643.9" rx="2.8" ry="2.2" transform="rotate(97 6.4 643.9)" fill="#c2dbac" opacity="0.69"/><ellipse cx="9.8" cy="673.5" rx="4.5" ry="2.4" transform="rotate(36 9.8 673.5)" fill="#c2dbac" opacity="0.72"/><ellipse cx="59.3" cy="710.8" rx="5.6" ry="2.8" transform="rotate(43 59.3 710.8)" fill="#bcd7a5" opacity="0.51"/><ellipse cx="56.6" cy="668.8" rx="6.0" ry="2.9" transform="rotate(124 56.6 668.8)" fill="#bcd7a5" opacity="0.53"/><ellipse cx="10.3" cy="704.1" rx="7.0" ry="2.6" transform="rotate(112 10.3 704.1)" fill="#bcd7a5" opacity="0.62"/><ellipse cx="53.4" cy="628.4" rx="4.9" ry="2.1" transform="rotate(107 53.4 628.4)" fill="#b7d3a0" opacity="0.78"/><ellipse cx="3.7" cy="644.6" rx="5.0" ry="4.0" transform="rotate(7 3.7 644.6)" fill="#b7d3a0" opacity="0.81"/><ellipse cx="10.5" cy="650.4" rx="2.4" ry="3.4" transform="rotate(107 10.5 650.4)" fill="#bcd7a5" opacity="0.50"/><ellipse cx="56.4" cy="661.2" rx="4.0" ry="1.7" transform="rotate(44 56.4 661.2)" fill="#b7d3a0" opacity="0.70"/><ellipse cx="10.0" cy="699.8" rx="5.9" ry="2.0" transform="rotate(166 10.0 699.8)" fill="#b7d3a0" opacity="0.63"/><ellipse cx="58.6" cy="719.7" rx="6.0" ry="2.7" transform="rotate(90 58.6 719.7)" fill="#c2dbac" opacity="0.86"/><ellipse cx="45.1" cy="683.6" rx="3.0" ry="3.1" transform="rotate(152 45.1 683.6)" fill="#c2dbac" opacity="0.54"/><ellipse cx="43.0" cy="654.9" rx="2.8" ry="3.9" transform="rotate(121 43.0 654.9)" fill="#b7d3a0" opacity="0.70"/><ellipse cx="15.6" cy="689.4" rx="3.5" ry="1.6" transform="rotate(84 15.6 689.4)" fill="#b7d3a0" opacity="0.74"/><ellipse cx="26.1" cy="702.5" rx="5.9" ry="3.7" transform="rotate(54 26.1 702.5)" fill="#b7d3a0" opacity="0.71"/><ellipse cx="56.8" cy="631.6" rx="6.8" ry="3.5" transform="rotate(45 56.8 631.6)" fill="#bcd7a5" opacity="0.60"/><ellipse cx="35.3" cy="676.2" rx="6.4" ry="2.9" transform="rotate(168 35.3 676.2)" fill="#b7d3a0" opacity="0.52"/><ellipse cx="39.8" cy="659.5" rx="5.1" ry="3.4" transform="rotate(62 39.8 659.5)" fill="#c2dbac" opacity="0.66"/><ellipse cx="5.2" cy="685.2" rx="6.2" ry="2.3" transform="rotate(107 5.2 685.2)" fill="#c2dbac" opacity="0.82"/><ellipse cx="0.3" cy="668.9" rx="2.1" ry="1.8" transform="rotate(146 0.3 668.9)" fill="#c2dbac" opacity="0.66"/><ellipse cx="18.0" cy="634.6" rx="4.7" ry="1.7" transform="rotate(71 18.0 634.6)" fill="#c2dbac" opacity="0.75"/><ellipse cx="17.5" cy="628.8" rx="3.4" ry="3.3" transform="rotate(80 17.5 628.8)" fill="#b7d3a0" opacity="0.72"/><ellipse cx="14.5" cy="641.6" rx="5.1" ry="2.4" transform="rotate(161 14.5 641.6)" fill="#c2dbac" opacity="0.61"/><ellipse cx="57.5" cy="656.2" rx="3.1" ry="3.7" transform="rotate(110 57.5 656.2)" fill="#c2dbac" opacity="0.62"/><ellipse cx="19.1" cy="707.6" rx="6.0" ry="3.0" transform="rotate(154 19.1 707.6)" fill="#bcd7a5" opacity="0.66"/><ellipse cx="0.5" cy="705.3" rx="2.5" ry="2.1" transform="rotate(102 0.5 705.3)" fill="#b7d3a0" opacity="0.60"/><ellipse cx="21.1" cy="630.1" rx="4.8" ry="3.7" transform="rotate(92 21.1 630.1)" fill="#c2dbac" opacity="0.55"/><ellipse cx="45.2" cy="645.3" rx="4.1" ry="2.8" transform="rotate(60 45.2 645.3)" fill="#c2dbac" opacity="0.88"/><ellipse cx="21.7" cy="686.1" rx="5.2" ry="2.4" transform="rotate(94 21.7 686.1)" fill="#b7d3a0" opacity="0.52"/><ellipse cx="39.3" cy="669.3" rx="5.5" ry="1.5" transform="rotate(158 39.3 669.3)" fill="#b7d3a0" opacity="0.55"/><ellipse cx="22.6" cy="651.1" rx="4.6" ry="1.9" transform="rotate(109 22.6 651.1)" fill="#c2dbac" opacity="0.51"/><ellipse cx="19.5" cy="633.7" rx="6.8" ry="3.7" transform="rotate(26 19.5 633.7)" fill="#b7d3a0" opacity="0.87"/><ellipse cx="30.5" cy="719.8" rx="2.9" ry="3.0" transform="rotate(177 30.5 719.8)" fill="#b7d3a0" opacity="0.80"/><ellipse cx="17.5" cy="674.4" rx="4.1" ry="3.9" transform="rotate(117 17.5 674.4)" fill="#b7d3a0" opacity="0.76"/><ellipse cx="29.6" cy="717.5" rx="3.8" ry="3.8" transform="rotate(58 29.6 717.5)" fill="#b7d3a0" opacity="0.70"/><ellipse cx="2.9" cy="673.2" rx="6.5" ry="2.0" transform="rotate(145 2.9 673.2)" fill="#bcd7a5" opacity="0.56"/><ellipse cx="44.3" cy="637.1" rx="3.6" ry="1.6" transform="rotate(54 44.3 637.1)" fill="#c2dbac" opacity="0.81"/><ellipse cx="21.6" cy="689.4" rx="3.4" ry="3.7" transform="rotate(85 21.6 689.4)" fill="#b7d3a0" opacity="0.63"/><ellipse cx="26.3" cy="630.8" rx="3.3" ry="2.5" transform="rotate(69 26.3 630.8)" fill="#c2dbac" opacity="0.61"/><ellipse cx="12.2" cy="710.9" rx="4.3" ry="3.6" transform="rotate(115 12.2 710.9)" fill="#c2dbac" opacity="0.52"/><ellipse cx="16.7" cy="673.6" rx="5.3" ry="3.6" transform="rotate(74 16.7 673.6)" fill="#bcd7a5" opacity="0.61"/><ellipse cx="21.8" cy="711.7" rx="4.6" ry="2.2" transform="rotate(113 21.8 711.7)" fill="#c2dbac" opacity="0.68"/><ellipse cx="0.7" cy="673.2" rx="5.5" ry="2.3" transform="rotate(108 0.7 673.2)" fill="#c2dbac" opacity="0.61"/><ellipse cx="14.6" cy="627.0" rx="4.7" ry="3.4" transform="rotate(122 14.6 627.0)" fill="#c2dbac" opacity="0.83"/><ellipse cx="42.7" cy="713.0" rx="2.8" ry="1.9" transform="rotate(130 42.7 713.0)" fill="#b7d3a0" opacity="0.78"/><ellipse cx="46.5" cy="659.4" rx="6.7" ry="3.4" transform="rotate(62 46.5 659.4)" fill="#c2dbac" opacity="0.70"/><ellipse cx="20.2" cy="706.5" rx="5.6" ry="1.9" transform="rotate(132 20.2 706.5)" fill="#c2dbac" opacity="0.77"/><ellipse cx="54.1" cy="633.4" rx="3.7" ry="1.7" transform="rotate(74 54.1 633.4)" fill="#b7d3a0" opacity="0.50"/><ellipse cx="34.4" cy="643.6" rx="4.2" ry="2.0" transform="rotate(131 34.4 643.6)" fill="#b7d3a0" opacity="0.82"/><ellipse cx="50.3" cy="635.1" rx="5.4" ry="3.4" transform="rotate(90 50.3 635.1)" fill="#c2dbac" opacity="0.86"/><ellipse cx="44.6" cy="702.1" rx="5.2" ry="3.7" transform="rotate(24 44.6 702.1)" fill="#b7d3a0" opacity="0.85"/><ellipse cx="23.1" cy="709.6" rx="5.6" ry="3.4" transform="rotate(109 23.1 709.6)" fill="#b7d3a0" opacity="0.61"/><ellipse cx="12.8" cy="642.4" rx="2.5" ry="3.2" transform="rotate(175 12.8 642.4)" fill="#bcd7a5" opacity="0.64"/><ellipse cx="42.0" cy="627.2" rx="6.2" ry="2.3" transform="rotate(1 42.0 627.2)" fill="#b7d3a0" opacity="0.81"/><ellipse cx="26.8" cy="670.3" rx="6.9" ry="3.0" transform="rotate(107 26.8 670.3)" fill="#bcd7a5" opacity="0.52"/><ellipse cx="49.6" cy="631.1" rx="3.1" ry="3.1" transform="rotate(61 49.6 631.1)" fill="#c2dbac" opacity="0.71"/><ellipse cx="13.8" cy="675.7" rx="6.1" ry="2.2" transform="rotate(175 13.8 675.7)" fill="#b7d3a0" opacity="0.71"/><ellipse cx="39.5" cy="761.6" rx="2.2" ry="2.8" transform="rotate(76 39.5 761.6)" fill="#bcd7a5" opacity="0.88"/><ellipse cx="67.2" cy="729.2" rx="2.7" ry="2.5" transform="rotate(172 67.2 729.2)" fill="#c2dbac" opacity="0.59"/><ellipse cx="134.9" cy="771.8" rx="6.8" ry="3.9" transform="rotate(59 134.9 771.8)" fill="#c2dbac" opacity="0.53"/><ellipse cx="90.5" cy="731.3" rx="4.7" ry="3.2" transform="rotate(128 90.5 731.3)" fill="#c2dbac" opacity="0.58"/><ellipse cx="106.2" cy="730.3" rx="3.0" ry="3.4" transform="rotate(14 106.2 730.3)" fill="#b7d3a0" opacity="0.51"/><ellipse cx="124.6" cy="762.1" rx="6.5" ry="3.4" transform="rotate(36 124.6 762.1)" fill="#b7d3a0" opacity="0.84"/><ellipse cx="69.8" cy="761.9" rx="2.1" ry="3.3" transform="rotate(110 69.8 761.9)" fill="#bcd7a5" opacity="0.53"/><ellipse cx="59.4" cy="725.6" rx="7.2" ry="3.3" transform="rotate(113 59.4 725.6)" fill="#c2dbac" opacity="0.72"/><ellipse cx="107.5" cy="751.6" rx="3.9" ry="2.4" transform="rotate(19 107.5 751.6)" fill="#b7d3a0" opacity="0.57"/><ellipse cx="76.5" cy="767.3" rx="6.8" ry="2.6" transform="rotate(18 76.5 767.3)" fill="#bcd7a5" opacity="0.84"/><ellipse cx="77.5" cy="766.6" rx="4.9" ry="1.7" transform="rotate(61 77.5 766.6)" fill="#c2dbac" opacity="0.69"/><ellipse cx="129.7" cy="731.0" rx="2.7" ry="2.9" transform="rotate(91 129.7 731.0)" fill="#bcd7a5" opacity="0.64"/><ellipse cx="110.8" cy="769.1" rx="3.2" ry="2.2" transform="rotate(147 110.8 769.1)" fill="#b7d3a0" opacity="0.67"/><ellipse cx="119.5" cy="743.1" rx="6.9" ry="3.6" transform="rotate(24 119.5 743.1)" fill="#bcd7a5" opacity="0.54"/><ellipse cx="119.0" cy="750.0" rx="2.2" ry="3.5" transform="rotate(175 119.0 750.0)" fill="#bcd7a5" opacity="0.69"/><ellipse cx="40.9" cy="766.8" rx="5.2" ry="1.7" transform="rotate(58 40.9 766.8)" fill="#b7d3a0" opacity="0.72"/><ellipse cx="88.6" cy="761.1" rx="7.4" ry="1.5" transform="rotate(37 88.6 761.1)" fill="#c2dbac" opacity="0.65"/><ellipse cx="47.9" cy="752.8" rx="2.8" ry="2.0" transform="rotate(82 47.9 752.8)" fill="#b7d3a0" opacity="0.87"/><ellipse cx="114.1" cy="768.0" rx="6.6" ry="2.9" transform="rotate(129 114.1 768.0)" fill="#c2dbac" opacity="0.57"/><ellipse cx="110.3" cy="765.5" rx="7.9" ry="3.3" transform="rotate(85 110.3 765.5)" fill="#c2dbac" opacity="0.74"/><ellipse cx="49.5" cy="748.4" rx="4.3" ry="3.2" transform="rotate(144 49.5 748.4)" fill="#bcd7a5" opacity="0.50"/><ellipse cx="100.5" cy="760.0" rx="3.3" ry="3.3" transform="rotate(117 100.5 760.0)" fill="#bcd7a5" opacity="0.54"/><ellipse cx="147.3" cy="762.7" rx="2.2" ry="1.6" transform="rotate(43 147.3 762.7)" fill="#bcd7a5" opacity="0.81"/><ellipse cx="41.0" cy="751.1" rx="5.5" ry="2.5" transform="rotate(7 41.0 751.1)" fill="#c2dbac" opacity="0.51"/><ellipse cx="122.3" cy="729.9" rx="7.8" ry="3.3" transform="rotate(34 122.3 729.9)" fill="#b7d3a0" opacity="0.57"/><ellipse cx="94.4" cy="730.0" rx="6.7" ry="3.7" transform="rotate(165 94.4 730.0)" fill="#bcd7a5" opacity="0.53"/><ellipse cx="39.4" cy="755.5" rx="2.5" ry="2.9" transform="rotate(110 39.4 755.5)" fill="#b7d3a0" opacity="0.53"/><ellipse cx="42.2" cy="750.6" rx="3.7" ry="2.5" transform="rotate(1 42.2 750.6)" fill="#b7d3a0" opacity="0.58"/><ellipse cx="57.4" cy="748.8" rx="7.0" ry="2.0" transform="rotate(127 57.4 748.8)" fill="#b7d3a0" opacity="0.58"/><ellipse cx="84.9" cy="730.2" rx="7.9" ry="2.9" transform="rotate(63 84.9 730.2)" fill="#bcd7a5" opacity="0.54"/><ellipse cx="63.2" cy="766.4" rx="7.9" ry="1.7" transform="rotate(49 63.2 766.4)" fill="#c2dbac" opacity="0.80"/><ellipse cx="52.9" cy="753.5" rx="7.9" ry="3.4" transform="rotate(1 52.9 753.5)" fill="#bcd7a5" opacity="0.52"/><ellipse cx="113.8" cy="761.1" rx="3.3" ry="2.5" transform="rotate(177 113.8 761.1)" fill="#b7d3a0" opacity="0.73"/><ellipse cx="60.0" cy="760.7" rx="6.5" ry="1.7" transform="rotate(4 60.0 760.7)" fill="#bcd7a5" opacity="0.79"/><ellipse cx="39.5" cy="757.0" rx="7.1" ry="2.6" transform="rotate(158 39.5 757.0)" fill="#bcd7a5" opacity="0.75"/><ellipse cx="69.4" cy="737.0" rx="2.8" ry="3.5" transform="rotate(152 69.4 737.0)" fill="#bcd7a5" opacity="0.63"/><ellipse cx="46.8" cy="745.8" rx="7.9" ry="3.1" transform="rotate(168 46.8 745.8)" fill="#b7d3a0" opacity="0.83"/><ellipse cx="149.3" cy="760.4" rx="3.6" ry="2.1" transform="rotate(74 149.3 760.4)" fill="#bcd7a5" opacity="0.64"/><ellipse cx="98.0" cy="741.8" rx="6.9" ry="1.5" transform="rotate(139 98.0 741.8)" fill="#bcd7a5" opacity="0.86"/><ellipse cx="126.6" cy="750.0" rx="2.6" ry="3.6" transform="rotate(56 126.6 750.0)" fill="#b7d3a0" opacity="0.63"/><ellipse cx="43.3" cy="730.7" rx="4.7" ry="2.0" transform="rotate(10 43.3 730.7)" fill="#b7d3a0" opacity="0.72"/><ellipse cx="142.9" cy="744.2" rx="7.5" ry="3.2" transform="rotate(174 142.9 744.2)" fill="#bcd7a5" opacity="0.76"/><ellipse cx="60.9" cy="760.5" rx="7.3" ry="3.3" transform="rotate(78 60.9 760.5)" fill="#bcd7a5" opacity="0.90"/><ellipse cx="56.1" cy="745.6" rx="6.1" ry="3.2" transform="rotate(134 56.1 745.6)" fill="#c2dbac" opacity="0.60"/><ellipse cx="65.3" cy="726.3" rx="6.1" ry="2.0" transform="rotate(47 65.3 726.3)" fill="#b7d3a0" opacity="0.76"/><ellipse cx="103.4" cy="755.8" rx="5.6" ry="3.2" transform="rotate(55 103.4 755.8)" fill="#bcd7a5" opacity="0.79"/><ellipse cx="97.1" cy="728.5" rx="2.4" ry="2.9" transform="rotate(130 97.1 728.5)" fill="#b7d3a0" opacity="0.89"/><ellipse cx="114.4" cy="737.9" rx="6.6" ry="1.9" transform="rotate(18 114.4 737.9)" fill="#c2dbac" opacity="0.66"/><ellipse cx="115.4" cy="733.1" rx="7.9" ry="3.7" transform="rotate(155 115.4 733.1)" fill="#c2dbac" opacity="0.64"/><ellipse cx="130.9" cy="726.4" rx="7.0" ry="2.1" transform="rotate(154 130.9 726.4)" fill="#c2dbac" opacity="0.77"/><ellipse cx="67.7" cy="725.5" rx="3.1" ry="3.8" transform="rotate(28 67.7 725.5)" fill="#b7d3a0" opacity="0.76"/><ellipse cx="71.6" cy="737.4" rx="2.3" ry="2.7" transform="rotate(151 71.6 737.4)" fill="#bcd7a5" opacity="0.65"/><ellipse cx="110.4" cy="751.8" rx="3.3" ry="1.7" transform="rotate(3 110.4 751.8)" fill="#bcd7a5" opacity="0.87"/><ellipse cx="76.5" cy="750.5" rx="3.1" ry="2.4" transform="rotate(133 76.5 750.5)" fill="#c2dbac" opacity="0.65"/><ellipse cx="95.6" cy="730.2" rx="3.5" ry="3.5" transform="rotate(51 95.6 730.2)" fill="#c2dbac" opacity="0.87"/><ellipse cx="39.4" cy="755.5" rx="7.3" ry="3.4" transform="rotate(154 39.4 755.5)" fill="#bcd7a5" opacity="0.76"/><ellipse cx="89.8" cy="765.9" rx="2.3" ry="3.2" transform="rotate(151 89.8 765.9)" fill="#bcd7a5" opacity="0.61"/><ellipse cx="89.9" cy="747.9" rx="2.7" ry="2.9" transform="rotate(89 89.9 747.9)" fill="#c2dbac" opacity="0.55"/><ellipse cx="90.7" cy="733.2" rx="3.4" ry="2.6" transform="rotate(21 90.7 733.2)" fill="#bcd7a5" opacity="0.61"/><ellipse cx="86.6" cy="736.2" rx="4.0" ry="1.6" transform="rotate(92 86.6 736.2)" fill="#c2dbac" opacity="0.80"/><ellipse cx="38.1" cy="836.5" rx="7.8" ry="4.6" transform="rotate(20 38.1 836.5)" fill="#bad6a3" opacity="0.71"/><ellipse cx="22.0" cy="807.2" rx="7.3" ry="2.6" transform="rotate(15 22.0 807.2)" fill="#bad6a3" opacity="0.69"/><ellipse cx="57.3" cy="833.0" rx="3.7" ry="4.4" transform="rotate(114 57.3 833.0)" fill="#b4d29c" opacity="0.58"/><ellipse cx="43.1" cy="815.2" rx="3.6" ry="5.0" transform="rotate(87 43.1 815.2)" fill="#b4d29c" opacity="0.70"/><ellipse cx="41.4" cy="834.1" rx="7.5" ry="3.9" transform="rotate(124 41.4 834.1)" fill="#b4d29c" opacity="0.71"/><ellipse cx="21.7" cy="821.0" rx="6.0" ry="4.0" transform="rotate(26 21.7 821.0)" fill="#bad6a3" opacity="0.80"/><ellipse cx="52.9" cy="815.4" rx="7.5" ry="2.5" transform="rotate(41 52.9 815.4)" fill="#bad6a3" opacity="0.86"/><ellipse cx="14.1" cy="809.1" rx="3.2" ry="3.3" transform="rotate(25 14.1 809.1)" fill="#b4d29c" opacity="0.62"/><ellipse cx="25.7" cy="808.4" rx="3.3" ry="2.1" transform="rotate(30 25.7 808.4)" fill="#bad6a3" opacity="0.88"/><ellipse cx="21.7" cy="820.0" rx="5.6" ry="4.8" transform="rotate(89 21.7 820.0)" fill="#b4d29c" opacity="0.75"/><ellipse cx="20.8" cy="835.0" rx="4.0" ry="5.0" transform="rotate(82 20.8 835.0)" fill="#b4d29c" opacity="0.89"/><ellipse cx="47.8" cy="801.3" rx="3.9" ry="3.2" transform="rotate(128 47.8 801.3)" fill="#bad6a3" opacity="0.81"/><ellipse cx="21.9" cy="835.2" rx="3.8" ry="4.4" transform="rotate(109 21.9 835.2)" fill="#bad6a3" opacity="0.72"/><ellipse cx="45.6" cy="805.8" rx="4.2" ry="2.4" transform="rotate(173 45.6 805.8)" fill="#b4d29c" opacity="0.86"/><ellipse cx="59.9" cy="805.7" rx="4.6" ry="4.3" transform="rotate(30 59.9 805.7)" fill="#bad6a3" opacity="0.57"/><ellipse cx="39.3" cy="819.0" rx="5.0" ry="4.7" transform="rotate(119 39.3 819.0)" fill="#b4d29c" opacity="0.88"/><ellipse cx="23.4" cy="839.6" rx="5.0" ry="2.2" transform="rotate(165 23.4 839.6)" fill="#b4d29c" opacity="0.89"/><ellipse cx="55.2" cy="803.0" rx="6.8" ry="2.5" transform="rotate(25 55.2 803.0)" fill="#b4d29c" opacity="0.71"/><ellipse cx="52.4" cy="833.9" rx="6.3" ry="3.5" transform="rotate(21 52.4 833.9)" fill="#b4d29c" opacity="0.70"/><ellipse cx="36.5" cy="828.6" rx="4.8" ry="3.6" transform="rotate(100 36.5 828.6)" fill="#bad6a3" opacity="0.53"/><ellipse cx="54.9" cy="824.0" rx="3.9" ry="4.1" transform="rotate(46 54.9 824.0)" fill="#b4d29c" opacity="0.66"/><ellipse cx="57.8" cy="810.8" rx="7.1" ry="4.1" transform="rotate(10 57.8 810.8)" fill="#bad6a3" opacity="0.58"/><ellipse cx="26.4" cy="838.6" rx="5.2" ry="3.0" transform="rotate(137 26.4 838.6)" fill="#b4d29c" opacity="0.69"/><ellipse cx="26.2" cy="840.8" rx="7.9" ry="2.3" transform="rotate(175 26.2 840.8)" fill="#bad6a3" opacity="0.66"/><ellipse cx="16.7" cy="831.4" rx="4.9" ry="4.1" transform="rotate(68 16.7 831.4)" fill="#bad6a3" opacity="0.81"/><ellipse cx="16.4" cy="809.3" rx="4.1" ry="2.8" transform="rotate(6 16.4 809.3)" fill="#b4d29c" opacity="0.85"/><ellipse cx="40.8" cy="827.1" rx="5.3" ry="3.4" transform="rotate(60 40.8 827.1)" fill="#bad6a3" opacity="0.64"/><ellipse cx="47.9" cy="813.2" rx="7.1" ry="4.1" transform="rotate(122 47.9 813.2)" fill="#b4d29c" opacity="0.66"/><ellipse cx="15.9" cy="826.4" rx="4.5" ry="3.7" transform="rotate(37 15.9 826.4)" fill="#b4d29c" opacity="0.78"/><ellipse cx="58.3" cy="808.2" rx="6.8" ry="2.9" transform="rotate(46 58.3 808.2)" fill="#b4d29c" opacity="0.74"/><ellipse cx="148.7" cy="838.0" rx="5.9" ry="2.6" transform="rotate(3 148.7 838.0)" fill="#b7d3a0" opacity="0.66"/><ellipse cx="127.0" cy="810.9" rx="7.0" ry="4.5" transform="rotate(15 127.0 810.9)" fill="#bcd7a5" opacity="0.50"/><ellipse cx="102.2" cy="818.5" rx="6.6" ry="5.0" transform="rotate(3 102.2 818.5)" fill="#bcd7a5" opacity="0.53"/><ellipse cx="91.6" cy="816.3" rx="5.3" ry="2.2" transform="rotate(63 91.6 816.3)" fill="#c2dbac" opacity="0.67"/><ellipse cx="120.9" cy="818.3" rx="3.3" ry="2.3" transform="rotate(29 120.9 818.3)" fill="#bcd7a5" opacity="0.53"/><ellipse cx="88.9" cy="841.2" rx="3.7" ry="4.6" transform="rotate(59 88.9 841.2)" fill="#b7d3a0" opacity="0.70"/><ellipse cx="99.1" cy="839.7" rx="5.8" ry="2.2" transform="rotate(28 99.1 839.7)" fill="#b7d3a0" opacity="0.67"/><ellipse cx="107.1" cy="810.5" rx="4.6" ry="2.2" transform="rotate(85 107.1 810.5)" fill="#bcd7a5" opacity="0.73"/><ellipse cx="99.3" cy="832.6" rx="7.0" ry="4.4" transform="rotate(42 99.3 832.6)" fill="#bcd7a5" opacity="0.83"/><ellipse cx="120.4" cy="823.9" rx="3.1" ry="4.8" transform="rotate(39 120.4 823.9)" fill="#b7d3a0" opacity="0.68"/><ellipse cx="141.3" cy="826.0" rx="5.6" ry="3.0" transform="rotate(10 141.3 826.0)" fill="#bcd7a5" opacity="0.79"/><ellipse cx="101.6" cy="819.3" rx="6.2" ry="4.1" transform="rotate(111 101.6 819.3)" fill="#bcd7a5" opacity="0.58"/><ellipse cx="108.3" cy="831.2" rx="4.3" ry="2.5" transform="rotate(41 108.3 831.2)" fill="#c2dbac" opacity="0.83"/><ellipse cx="138.7" cy="840.7" rx="7.0" ry="2.9" transform="rotate(57 138.7 840.7)" fill="#b7d3a0" opacity="0.62"/><ellipse cx="143.1" cy="820.1" rx="4.5" ry="3.0" transform="rotate(43 143.1 820.1)" fill="#bcd7a5" opacity="0.87"/><ellipse cx="150.8" cy="824.8" rx="4.0" ry="2.4" transform="rotate(91 150.8 824.8)" fill="#b7d3a0" opacity="0.85"/><ellipse cx="136.4" cy="825.2" rx="4.6" ry="2.2" transform="rotate(119 136.4 825.2)" fill="#b7d3a0" opacity="0.65"/><ellipse cx="121.3" cy="818.1" rx="6.3" ry="2.7" transform="rotate(57 121.3 818.1)" fill="#c2dbac" opacity="0.88"/><ellipse cx="116.4" cy="832.6" rx="5.7" ry="4.3" transform="rotate(130 116.4 832.6)" fill="#c2dbac" opacity="0.75"/><ellipse cx="92.9" cy="824.6" rx="6.2" ry="2.8" transform="rotate(7 92.9 824.6)" fill="#b7d3a0" opacity="0.55"/><ellipse cx="119.9" cy="829.8" rx="4.5" ry="2.2" transform="rotate(135 119.9 829.8)" fill="#c2dbac" opacity="0.67"/><ellipse cx="91.4" cy="822.6" rx="3.5" ry="4.9" transform="rotate(9 91.4 822.6)" fill="#c2dbac" opacity="0.86"/><ellipse cx="135.3" cy="827.0" rx="6.5" ry="2.9" transform="rotate(147 135.3 827.0)" fill="#b7d3a0" opacity="0.83"/><ellipse cx="97.7" cy="815.6" rx="6.8" ry="3.3" transform="rotate(61 97.7 815.6)" fill="#bcd7a5" opacity="0.86"/><ellipse cx="119.4" cy="827.7" rx="3.5" ry="4.8" transform="rotate(169 119.4 827.7)" fill="#b7d3a0" opacity="0.86"/><ellipse cx="75.6" cy="614.3" rx="2.2" ry="1.4" transform="rotate(84 75.6 614.3)" fill="#dfe8d3" opacity="0.79"/><ellipse cx="20.7" cy="515.2" rx="2.9" ry="1.2" transform="rotate(146 20.7 515.2)" fill="#d6e4c6" opacity="0.82"/><ellipse cx="4.4" cy="556.7" rx="2.6" ry="2.0" transform="rotate(176 4.4 556.7)" fill="#d6e4c6" opacity="0.63"/><ellipse cx="116.7" cy="600.3" rx="2.4" ry="2.0" transform="rotate(10 116.7 600.3)" fill="#dfe8d3" opacity="0.85"/><ellipse cx="92.0" cy="491.4" rx="2.5" ry="1.9" transform="rotate(162 92.0 491.4)" fill="#d6e4c6" opacity="0.59"/><ellipse cx="50.8" cy="604.5" rx="2.9" ry="1.5" transform="rotate(111 50.8 604.5)" fill="#d6e4c6" opacity="0.65"/><ellipse cx="17.6" cy="519.5" rx="2.8" ry="1.6" transform="rotate(114 17.6 519.5)" fill="#dfe8d3" opacity="0.83"/><ellipse cx="103.1" cy="496.8" rx="2.8" ry="1.3" transform="rotate(27 103.1 496.8)" fill="#d6e4c6" opacity="0.60"/><ellipse cx="104.9" cy="539.5" rx="2.7" ry="1.2" transform="rotate(97 104.9 539.5)" fill="#d6e4c6" opacity="0.77"/><ellipse cx="8.8" cy="606.5" rx="1.3" ry="1.5" transform="rotate(139 8.8 606.5)" fill="#dfe8d3" opacity="0.82"/><ellipse cx="134.8" cy="617.3" rx="2.9" ry="1.7" transform="rotate(83 134.8 617.3)" fill="#dfe8d3" opacity="0.79"/><ellipse cx="57.7" cy="498.3" rx="1.2" ry="2.3" transform="rotate(163 57.7 498.3)" fill="#dfe8d3" opacity="0.59"/><ellipse cx="11.3" cy="498.8" rx="2.5" ry="1.3" transform="rotate(83 11.3 498.8)" fill="#d6e4c6" opacity="0.62"/><ellipse cx="76.3" cy="539.2" rx="2.3" ry="2.3" transform="rotate(104 76.3 539.2)" fill="#d6e4c6" opacity="0.86"/><ellipse cx="117.4" cy="530.5" rx="2.7" ry="1.9" transform="rotate(19 117.4 530.5)" fill="#dfe8d3" opacity="0.69"/><ellipse cx="66.6" cy="604.5" rx="2.3" ry="1.3" transform="rotate(65 66.6 604.5)" fill="#d6e4c6" opacity="0.87"/><ellipse cx="105.4" cy="602.2" rx="2.3" ry="1.9" transform="rotate(83 105.4 602.2)" fill="#d6e4c6" opacity="0.51"/><ellipse cx="21.0" cy="619.8" rx="1.4" ry="1.4" transform="rotate(93 21.0 619.8)" fill="#d6e4c6" opacity="0.54"/><ellipse cx="127.0" cy="568.5" rx="1.1" ry="1.6" transform="rotate(170 127.0 568.5)" fill="#d6e4c6" opacity="0.56"/><ellipse cx="101.9" cy="500.0" rx="1.8" ry="1.5" transform="rotate(178 101.9 500.0)" fill="#dfe8d3" opacity="0.70"/><ellipse cx="120.3" cy="491.4" rx="2.7" ry="1.9" transform="rotate(68 120.3 491.4)" fill="#dfe8d3" opacity="0.57"/><ellipse cx="145.6" cy="561.7" rx="2.5" ry="2.3" transform="rotate(65 145.6 561.7)" fill="#dfe8d3" opacity="0.58"/><ellipse cx="3.7" cy="555.3" rx="2.8" ry="2.4" transform="rotate(172 3.7 555.3)" fill="#d6e4c6" opacity="0.87"/><ellipse cx="89.6" cy="508.7" rx="2.3" ry="2.2" transform="rotate(76 89.6 508.7)" fill="#d6e4c6" opacity="0.74"/><ellipse cx="37.4" cy="518.1" rx="2.3" ry="1.1" transform="rotate(139 37.4 518.1)" fill="#d6e4c6" opacity="0.86"/></g>
  <!-- water -->
  <path d="M90 454 C98 451 106 453 108 459 C104 464 95 464 90 460Z" fill="#a9cfe0"/>
  <path d="M26 588 C32 586 36 592 34 600 C30 604 25 600 24 594Z" fill="#a9cfe0"/>
  <!-- rivers -->
  <g fill="none" stroke="#b5d5e2" stroke-width="1.1">
    <path d="M72 260 C80 275 95 290 110 300 C125 315 130 335 135 350"/>
    <path d="M10 350 C30 355 50 365 70 370 C90 375 105 385 110 400 C115 410 112 420 110 430"/>
    <path d="M85 470 C80 500 78 520 60 535 C45 545 30 550 20 560"/>
    <path d="M140 520 C120 540 100 555 80 560 C65 565 58 575 52 580"/>
    <path d="M90 650 C88 665 92 680 95 690"/>
  </g>
  <!-- orange roads -->
  <g fill="none" stroke="#eac39a" stroke-width="1.3">
    <path d="M110.6 20.3 C118 30 122 40 122 45 C124 60 125 70 124 79 C118 90 112 100 108 106 C100 115 92 122 86 126"/>
    <path d="M83.5 15.8 C110 12 130 10 160 9"/>
    <path d="M0 110 C20 112 35 115 45 120"/>
    <path d="M0 415 C15 405 30 400 45 395 C70 385 90 377 108 370 C125 360 135 352 145 345"/>
    <path d="M0 447 C12 450 22 453 34 454 C45 452 55 445 65 443 C75 445 85 452 90 454 C110 458 130 462 160 466"/>
    <path d="M58 223 C65 235 70 245 74 255"/>
    <path d="M40 590 C45 605 55 615 70 625"/>
  </g>
  <g fill="none" stroke="#e9c7a3" stroke-width="1" opacity="0.9">
    <path d="M0 50 C15 48 30 55 50 60"/>
    <path d="M120 100 C130 110 140 115 160 118"/>
    <path d="M0 280 C20 275 35 282 50 290 C60 300 70 305 80 310"/>
    <path d="M95 190 C110 200 125 205 140 200"/>
    <path d="M10 175 C20 185 30 200 40 205"/>
    <path d="M140 250 C145 270 150 300 155 320"/>
    <path d="M100 520 C110 540 125 555 140 560"/>
    <path d="M60 615 C70 625 80 640 95 650"/>
  </g>
  <!-- borders gray -->
  <g fill="none" stroke="#93828d" stroke-width="1.5">
    <path d="M13.5 0 L29 3.4 L56.4 24.8 L59.8 45 L61 79 L54 101.6 L40.6 122 L29.3 137.7 L13.5 151 L9 158 L18 162.5 L33.9 171.6 L47.4 189.6 L56.4 210 L58.7 223.5 L74.5 255"/>
    <path d="M54 126 L72 131 L83.5 140 L85.8 171.6 L85.8 210 L88 232.6 L83.5 259.7"/>
    <path d="M83.5 140 L94.8 131 L110.6 125.3"/>
    <path d="M153 74.5 L146.7 94.8 L144.5 131 L137.7 158 L140 210 L126.4 214.5 L128.7 250.6 L121.9 250.6 L88 248.4"/>
    <path d="M56.4 24.8 L63.2 45 L81.3 47.4 L99.3 36 L117.4 33.9 L153 36"/>
    <path d="M99.3 0 L103.8 29.3"/>
    <path d="M38.4 273.2 L22.6 289 L18 304.8 L24.8 316 L13.5 332 L4.5 341 L2.3 379.3"/>
    <path d="M146.7 340.9 L140 356.7 L128.7 363.5 L126.4 390.6 L112.9 408.6 L18 410.9 L0 420"/>
    <path d="M29.3 469.7 L18 494.5 L0 514.8"/>
    <path d="M0 522 L25 540.5 L27 552 L50 561 L52 572 L75 588 L82 611 L79.5 629 L91 638 L109 647 L122.7 668"/>
    <path d="M52 572 L36 572 L27 595 L20.5 611 L11 634"/>
  </g>
  <!-- main roads / rails darker -->
  <g fill="none" stroke="#86787f" stroke-width="1.7">
    <path d="M0 225.8 L24.8 248.4 L74.5 258.5 L90.3 266.4 L119.6 291.3 L135.4 316 L153 327.4"/>
    <path d="M0 750.7 L29.6 769 L45.6 785 L66 798.6 L109.3 810 L132 830.5 L141.2 842"/>
    <path d="M54.7 762 L86.6 773.5 L95.7 785 L153 787.2"/>
    <path d="M0 735 C20 745 40 760 45.6 785"/>
  </g>
  <path d="M54.5 679 L52 711 L59 738 L54.5 765 L45.5 784" fill="none" stroke="#8a8a8a" stroke-width="1.5"/>
  <path d="M54.5 679 L66 681 L79.5 684 L109 677 L122.7 668 L153 668" fill="none" stroke="#6f9a6d" stroke-width="1.6"/>
  <!-- red roads -->
  <g fill="none" stroke="#e8929c" stroke-width="1.4">
    <path d="M118.5 671 L118.5 698.3 L141.2 716.6 L150.3 732.5 L145.8 766.7 L123 771.2 L95.7 780.3 L72.9 785 L54.7 775.8 L38.7 766.7 L29.6 778 L13.7 794 L4.6 812 L9.1 842"/>
    <path d="M29.6 778 L34.2 805.4 L72.9 810 L118.5 819 L141.2 842"/>
    <path d="M0 582.5 L22.6 580.3 L31.6 584.8"/>
    <path d="M140 481 L146 470 L160 455"/>
  </g>
  <!-- danube -->
  <path d="M0 478.7 L31.6 466.3 L67.7 464 L85.8 468.5 L103.8 478.7 L126.4 477.6 L140 481 L154 487.7" fill="none" stroke="#8f8cb2" stroke-width="3.2" stroke-linejoin="round"/>
  <!-- labels -->
  <g font-family="Liberation Sans" fill="#4a4a4a" font-size="12">
    <text x="34" y="21">Petroșani</text>
    <text x="8" y="36" font-size="11.5">Lupeni</text>
    <text x="14" y="130">Târgu Jiu</text>
    <text x="37" y="155" fill="#8e6d9e" font-style="italic">Gorj</text>
    <text x="119" y="337.5" font-size="16">Craio</text>
    <text x="107" y="368" fill="#8e6d9e" font-style="italic" font-size="13">Dolj</text>
    <text x="-2" y="254" fill="#8e6d9e" font-style="italic">linți</text>
    <text x="33" y="420" font-size="12">Băilești</text>
    <text x="2" y="595" font-size="12.5">Монтана</text>
    <text x="77" y="653" font-size="12.5">Враца</text>
    <text x="24" y="796.5" font-size="15">София</text>
    <text x="-1" y="818.5" font-size="11">ик</text>
  </g>
  <!-- zoom control -->
  <rect x="9" y="9" width="28" height="53" rx="4" fill="#ffffff" opacity="0.45"/>
  <rect x="11" y="11" width="24" height="49" rx="2.5" fill="#6386b5"/>
  <rect x="11" y="35" width="24" height="1.2" fill="#c9d4e5"/>
  <rect x="17" y="21.3" width="12" height="2.6" fill="#fff"/>
  <rect x="21.7" y="16.6" width="2.6" height="12" fill="#fff"/>
  <rect x="17.5" y="46" width="11" height="2.6" fill="#fff"/>

  <!-- right strip -->
  <g transform="translate(1080,0)">
    <rect x="0" y="0" width="22" height="842" fill="#e6ead5"/>
    <path d="M9 0 H14 C14 12 14 28 13 37 H0 V14 H9Z" fill="#a7c8d7"/>
    <path d="M0 0 H9 V14 H0Z" fill="#e4e8d8"/>
    <path d="M0 14 H9 V0" stroke="#7a7a80" stroke-width="1" fill="none"/>
    <path d="M0 43 L22 54" stroke="#5d5a62" stroke-width="3"/>
    <path d="M0 50 C8 52 16 50 22 56 V70" stroke="#e39a8c" stroke-width="1" fill="none"/>
    <path d="M8 42 L22 30" stroke="#e39a8c" stroke-width="1" fill="none"/>
    <path d="M0 56 L22 62 V240 C15 250 8 230 0 245Z" fill="#c6ddb4"/>
    <path d="M4 120 C12 125 18 118 22 130 V160 C12 155 8 170 0 160 V130Z" fill="#d3e4c3"/>
    <path d="M0 200 C8 210 14 205 22 215 V240 C12 235 6 245 0 240Z" fill="#cfe2bc"/>
    <g filter="url(#bl2)"><ellipse cx="3.6" cy="205.2" rx="4.2" ry="2.1" transform="rotate(148 3.6 205.2)" fill="#bcd7a5" opacity="0.74"/><ellipse cx="19.9" cy="99.0" rx="4.3" ry="3.3" transform="rotate(135 19.9 99.0)" fill="#b7d3a0" opacity="0.74"/><ellipse cx="4.7" cy="215.0" rx="3.7" ry="2.8" transform="rotate(88 4.7 215.0)" fill="#bcd7a5" opacity="0.68"/><ellipse cx="1.9" cy="74.7" rx="5.2" ry="3.2" transform="rotate(26 1.9 74.7)" fill="#c2dbac" opacity="0.57"/><ellipse cx="4.8" cy="161.4" rx="3.6" ry="3.3" transform="rotate(179 4.8 161.4)" fill="#bcd7a5" opacity="0.56"/><ellipse cx="9.0" cy="175.1" rx="3.2" ry="1.9" transform="rotate(39 9.0 175.1)" fill="#bcd7a5" opacity="0.56"/><ellipse cx="13.0" cy="84.8" rx="3.2" ry="2.5" transform="rotate(151 13.0 84.8)" fill="#b7d3a0" opacity="0.69"/><ellipse cx="20.8" cy="148.3" rx="2.8" ry="3.0" transform="rotate(26 20.8 148.3)" fill="#bcd7a5" opacity="0.59"/><ellipse cx="7.7" cy="132.2" rx="2.3" ry="1.8" transform="rotate(132 7.7 132.2)" fill="#c2dbac" opacity="0.64"/><ellipse cx="15.2" cy="133.7" rx="2.6" ry="3.7" transform="rotate(103 15.2 133.7)" fill="#bcd7a5" opacity="0.52"/><ellipse cx="17.3" cy="149.3" rx="4.0" ry="3.3" transform="rotate(122 17.3 149.3)" fill="#c2dbac" opacity="0.75"/><ellipse cx="3.4" cy="181.4" rx="5.0" ry="1.5" transform="rotate(124 3.4 181.4)" fill="#b7d3a0" opacity="0.65"/><ellipse cx="18.7" cy="206.8" rx="4.4" ry="3.2" transform="rotate(61 18.7 206.8)" fill="#bcd7a5" opacity="0.72"/><ellipse cx="8.9" cy="95.4" rx="2.5" ry="3.7" transform="rotate(144 8.9 95.4)" fill="#bcd7a5" opacity="0.75"/><ellipse cx="17.7" cy="142.7" rx="3.1" ry="2.8" transform="rotate(4 17.7 142.7)" fill="#b7d3a0" opacity="0.71"/><ellipse cx="20.4" cy="179.0" rx="3.9" ry="2.3" transform="rotate(70 20.4 179.0)" fill="#b7d3a0" opacity="0.73"/><ellipse cx="18.9" cy="65.1" rx="5.2" ry="1.7" transform="rotate(146 18.9 65.1)" fill="#b7d3a0" opacity="0.72"/><ellipse cx="6.1" cy="122.8" rx="5.3" ry="1.9" transform="rotate(124 6.1 122.8)" fill="#bcd7a5" opacity="0.53"/><ellipse cx="4.6" cy="196.8" rx="2.6" ry="2.3" transform="rotate(39 4.6 196.8)" fill="#c2dbac" opacity="0.61"/><ellipse cx="16.1" cy="193.8" rx="5.6" ry="3.9" transform="rotate(99 16.1 193.8)" fill="#bcd7a5" opacity="0.81"/><ellipse cx="3.3" cy="215.3" rx="2.2" ry="2.7" transform="rotate(131 3.3 215.3)" fill="#c2dbac" opacity="0.54"/><ellipse cx="19.2" cy="199.9" rx="4.4" ry="3.9" transform="rotate(7 19.2 199.9)" fill="#bcd7a5" opacity="0.56"/><ellipse cx="0.9" cy="122.0" rx="4.8" ry="1.9" transform="rotate(83 0.9 122.0)" fill="#bcd7a5" opacity="0.57"/><ellipse cx="13.4" cy="185.1" rx="5.9" ry="2.4" transform="rotate(176 13.4 185.1)" fill="#c2dbac" opacity="0.63"/><ellipse cx="9.0" cy="143.6" rx="3.9" ry="1.6" transform="rotate(121 9.0 143.6)" fill="#bcd7a5" opacity="0.57"/><ellipse cx="19.6" cy="207.2" rx="4.5" ry="3.1" transform="rotate(80 19.6 207.2)" fill="#b7d3a0" opacity="0.77"/><ellipse cx="0.7" cy="142.4" rx="5.2" ry="2.9" transform="rotate(81 0.7 142.4)" fill="#bcd7a5" opacity="0.74"/><ellipse cx="7.4" cy="134.5" rx="5.8" ry="3.6" transform="rotate(165 7.4 134.5)" fill="#b7d3a0" opacity="0.71"/><ellipse cx="10.9" cy="188.0" rx="2.6" ry="3.1" transform="rotate(90 10.9 188.0)" fill="#b7d3a0" opacity="0.71"/><ellipse cx="0.1" cy="208.0" rx="3.7" ry="3.2" transform="rotate(103 0.1 208.0)" fill="#b7d3a0" opacity="0.77"/><ellipse cx="7.3" cy="149.8" rx="4.3" ry="3.9" transform="rotate(29 7.3 149.8)" fill="#c2dbac" opacity="0.58"/><ellipse cx="21.9" cy="100.6" rx="4.7" ry="3.0" transform="rotate(1 21.9 100.6)" fill="#b7d3a0" opacity="0.78"/><ellipse cx="7.0" cy="200.6" rx="3.0" ry="3.0" transform="rotate(29 7.0 200.6)" fill="#b7d3a0" opacity="0.70"/><ellipse cx="6.1" cy="230.9" rx="2.3" ry="3.8" transform="rotate(136 6.1 230.9)" fill="#bcd7a5" opacity="0.67"/><ellipse cx="1.8" cy="137.8" rx="3.2" ry="2.8" transform="rotate(127 1.8 137.8)" fill="#bcd7a5" opacity="0.53"/><ellipse cx="17.1" cy="80.8" rx="3.1" ry="1.8" transform="rotate(157 17.1 80.8)" fill="#c2dbac" opacity="0.85"/><ellipse cx="17.8" cy="76.9" rx="3.8" ry="2.4" transform="rotate(6 17.8 76.9)" fill="#b7d3a0" opacity="0.62"/><ellipse cx="1.4" cy="109.2" rx="5.1" ry="2.0" transform="rotate(91 1.4 109.2)" fill="#b7d3a0" opacity="0.90"/><ellipse cx="9.4" cy="166.6" rx="5.2" ry="3.4" transform="rotate(82 9.4 166.6)" fill="#c2dbac" opacity="0.66"/><ellipse cx="20.9" cy="148.5" rx="2.5" ry="3.4" transform="rotate(26 20.9 148.5)" fill="#b7d3a0" opacity="0.62"/><ellipse cx="13.2" cy="220.3" rx="4.9" ry="3.8" transform="rotate(63 13.2 220.3)" fill="#c2dbac" opacity="0.84"/><ellipse cx="5.7" cy="154.7" rx="3.8" ry="1.6" transform="rotate(15 5.7 154.7)" fill="#bcd7a5" opacity="0.59"/><ellipse cx="13.2" cy="222.3" rx="2.3" ry="2.2" transform="rotate(151 13.2 222.3)" fill="#b7d3a0" opacity="0.57"/><ellipse cx="3.0" cy="211.1" rx="2.5" ry="2.0" transform="rotate(90 3.0 211.1)" fill="#c2dbac" opacity="0.57"/><ellipse cx="19.9" cy="102.8" rx="5.4" ry="2.1" transform="rotate(47 19.9 102.8)" fill="#bcd7a5" opacity="0.59"/><ellipse cx="19.9" cy="174.2" rx="5.9" ry="3.4" transform="rotate(114 19.9 174.2)" fill="#b7d3a0" opacity="0.75"/><ellipse cx="21.3" cy="100.8" rx="3.7" ry="2.7" transform="rotate(56 21.3 100.8)" fill="#bcd7a5" opacity="0.80"/><ellipse cx="5.1" cy="146.8" rx="5.3" ry="3.9" transform="rotate(166 5.1 146.8)" fill="#bcd7a5" opacity="0.71"/><ellipse cx="2.6" cy="120.2" rx="5.6" ry="3.8" transform="rotate(162 2.6 120.2)" fill="#c2dbac" opacity="0.70"/><ellipse cx="5.9" cy="129.3" rx="4.2" ry="3.4" transform="rotate(106 5.9 129.3)" fill="#bcd7a5" opacity="0.64"/><ellipse cx="2.1" cy="131.5" rx="2.4" ry="2.0" transform="rotate(90 2.1 131.5)" fill="#f1f2ea" opacity="0.89"/><ellipse cx="8.5" cy="162.2" rx="3.3" ry="0.8" transform="rotate(37 8.5 162.2)" fill="#eef1e6" opacity="0.88"/><ellipse cx="10.0" cy="129.6" rx="5.1" ry="1.9" transform="rotate(125 10.0 129.6)" fill="#f1f2ea" opacity="0.88"/><ellipse cx="13.9" cy="161.4" rx="5.5" ry="1.6" transform="rotate(65 13.9 161.4)" fill="#eef1e6" opacity="0.62"/><ellipse cx="21.3" cy="106.7" rx="5.9" ry="0.9" transform="rotate(2 21.3 106.7)" fill="#eef1e6" opacity="0.58"/><ellipse cx="11.2" cy="83.6" rx="5.3" ry="1.6" transform="rotate(123 11.2 83.6)" fill="#eef1e6" opacity="0.90"/><ellipse cx="14.9" cy="192.5" rx="2.0" ry="0.9" transform="rotate(77 14.9 192.5)" fill="#f1f2ea" opacity="0.63"/><ellipse cx="12.5" cy="63.6" rx="3.7" ry="1.9" transform="rotate(106 12.5 63.6)" fill="#eef1e6" opacity="0.51"/><ellipse cx="4.5" cy="94.8" rx="5.3" ry="0.9" transform="rotate(168 4.5 94.8)" fill="#f1f2ea" opacity="0.73"/><ellipse cx="16.3" cy="237.0" rx="4.7" ry="1.3" transform="rotate(179 16.3 237.0)" fill="#eef1e6" opacity="0.53"/><ellipse cx="18.3" cy="241.6" rx="2.4" ry="1.7" transform="rotate(49 18.3 241.6)" fill="#eef1e6" opacity="0.67"/><ellipse cx="19.2" cy="66.0" rx="2.1" ry="0.9" transform="rotate(77 19.2 66.0)" fill="#f1f2ea" opacity="0.56"/><ellipse cx="16.0" cy="162.9" rx="3.4" ry="1.9" transform="rotate(46 16.0 162.9)" fill="#eef1e6" opacity="0.57"/><ellipse cx="3.3" cy="82.2" rx="5.2" ry="0.9" transform="rotate(56 3.3 82.2)" fill="#eef1e6" opacity="0.72"/><ellipse cx="9.1" cy="161.5" rx="2.1" ry="0.9" transform="rotate(76 9.1 161.5)" fill="#eef1e6" opacity="0.87"/><ellipse cx="0.1" cy="225.8" rx="3.4" ry="1.7" transform="rotate(150 0.1 225.8)" fill="#f1f2ea" opacity="0.67"/><ellipse cx="10.5" cy="69.6" rx="5.9" ry="2.0" transform="rotate(9 10.5 69.6)" fill="#eef1e6" opacity="0.87"/><ellipse cx="13.3" cy="95.1" rx="2.3" ry="0.9" transform="rotate(60 13.3 95.1)" fill="#eef1e6" opacity="0.64"/><ellipse cx="1.7" cy="200.1" rx="2.3" ry="1.7" transform="rotate(80 1.7 200.1)" fill="#eef1e6" opacity="0.57"/><ellipse cx="9.5" cy="232.5" rx="2.4" ry="1.4" transform="rotate(167 9.5 232.5)" fill="#eef1e6" opacity="0.70"/><ellipse cx="21.8" cy="492.5" rx="2.5" ry="2.2" transform="rotate(142 21.8 492.5)" fill="#d6e4c6" opacity="0.70"/><ellipse cx="7.4" cy="283.8" rx="2.5" ry="2.1" transform="rotate(92 7.4 283.8)" fill="#dfe8d3" opacity="0.59"/><ellipse cx="4.6" cy="335.5" rx="1.9" ry="1.4" transform="rotate(84 4.6 335.5)" fill="#dfe8d3" opacity="0.76"/><ellipse cx="2.2" cy="384.6" rx="2.1" ry="1.4" transform="rotate(66 2.2 384.6)" fill="#dfe8d3" opacity="0.61"/><ellipse cx="14.8" cy="323.5" rx="1.8" ry="2.0" transform="rotate(78 14.8 323.5)" fill="#dfe8d3" opacity="0.53"/><ellipse cx="1.3" cy="313.3" rx="1.5" ry="1.9" transform="rotate(69 1.3 313.3)" fill="#d6e4c6" opacity="0.60"/><ellipse cx="2.2" cy="555.2" rx="2.1" ry="1.7" transform="rotate(11 2.2 555.2)" fill="#d6e4c6" opacity="0.55"/><ellipse cx="1.5" cy="394.3" rx="2.3" ry="1.0" transform="rotate(33 1.5 394.3)" fill="#dfe8d3" opacity="0.82"/><ellipse cx="17.4" cy="274.7" rx="2.6" ry="1.4" transform="rotate(40 17.4 274.7)" fill="#d6e4c6" opacity="0.64"/><ellipse cx="15.3" cy="371.0" rx="2.4" ry="1.4" transform="rotate(176 15.3 371.0)" fill="#d6e4c6" opacity="0.57"/><ellipse cx="2.9" cy="429.5" rx="1.9" ry="1.4" transform="rotate(163 2.9 429.5)" fill="#d6e4c6" opacity="0.79"/><ellipse cx="2.5" cy="375.6" rx="2.3" ry="1.0" transform="rotate(8 2.5 375.6)" fill="#d6e4c6" opacity="0.53"/><ellipse cx="6.7" cy="444.8" rx="2.7" ry="2.1" transform="rotate(101 6.7 444.8)" fill="#d6e4c6" opacity="0.89"/><ellipse cx="14.2" cy="562.8" rx="2.1" ry="1.3" transform="rotate(93 14.2 562.8)" fill="#d6e4c6" opacity="0.79"/><ellipse cx="2.8" cy="367.1" rx="2.1" ry="2.5" transform="rotate(112 2.8 367.1)" fill="#dfe8d3" opacity="0.70"/><ellipse cx="9.2" cy="469.2" rx="1.4" ry="1.8" transform="rotate(50 9.2 469.2)" fill="#d6e4c6" opacity="0.81"/><ellipse cx="11.4" cy="332.2" rx="2.9" ry="1.8" transform="rotate(68 11.4 332.2)" fill="#d6e4c6" opacity="0.62"/><ellipse cx="18.3" cy="260.5" rx="1.5" ry="1.5" transform="rotate(123 18.3 260.5)" fill="#d6e4c6" opacity="0.84"/><ellipse cx="15.6" cy="400.2" rx="1.2" ry="1.5" transform="rotate(118 15.6 400.2)" fill="#dfe8d3" opacity="0.89"/><ellipse cx="9.5" cy="492.6" rx="1.5" ry="1.5" transform="rotate(3 9.5 492.6)" fill="#dfe8d3" opacity="0.64"/><ellipse cx="9.0" cy="394.4" rx="2.2" ry="2.3" transform="rotate(156 9.0 394.4)" fill="#d6e4c6" opacity="0.82"/><ellipse cx="5.0" cy="361.2" rx="1.2" ry="2.2" transform="rotate(133 5.0 361.2)" fill="#d6e4c6" opacity="0.54"/><ellipse cx="4.3" cy="545.8" rx="1.1" ry="1.2" transform="rotate(61 4.3 545.8)" fill="#d6e4c6" opacity="0.85"/><ellipse cx="9.7" cy="389.0" rx="1.6" ry="2.5" transform="rotate(33 9.7 389.0)" fill="#dfe8d3" opacity="0.64"/><ellipse cx="1.3" cy="472.6" rx="1.5" ry="1.1" transform="rotate(31 1.3 472.6)" fill="#dfe8d3" opacity="0.67"/></g>
    <path d="M0 175 C8 180 12 172 22 178" stroke="#e9c29a" stroke-width="1" fill="none"/>
    <path d="M0 318 C8 325 14 310 22 320" stroke="#8c8aa0" stroke-width="1.2" fill="none"/>
    <path d="M0 360 C8 358 15 365 22 360" stroke="#6f7b6c" stroke-width="1.2" fill="none"/>
    <path d="M0 388 C10 392 15 390 22 386" stroke="#e08c9a" stroke-width="1.2" fill="none"/>
    <path d="M0 440 C10 430 16 420 22 415" stroke="#e9c29a" stroke-width="1" fill="none"/>
    <path d="M0 494 C8 497 14 498 22 496" stroke="#8d86a8" stroke-width="2.4" fill="none"/>
    <path d="M0 590 C8 583 16 586 22 584 V842 H0Z" fill="#a5c6d2"/>
    <path d="M0 654 C8 657 16 658 22 658" stroke="#8f8aab" stroke-width="2.4" fill="none"/>
    <rect x="-6" y="803" width="20" height="31" rx="4" fill="#ffffff" opacity="0.45"/>
    <rect x="-4" y="805.5" width="15" height="26" rx="2.5" fill="#5d83b0"/>
  </g>
</svg>
</div>
<div id="popup">
  <div id="arrow"></div>
  <div id="phead">Surface-50ha</div>
  <div class="tbtn" style="left:115.5px;width:63.5px">Day</div>
  <div class="tbtn" style="left:185px;width:79px">Week</div>
  <div class="tbtn" style="left:269px;width:119px">Two weeks</div>
  <div class="tbtn" style="left:394px;width:85px;letter-spacing:1.6px;text-indent:1.2px">Month</div>
  <div class="tbtn on" style="left:486px;width:145px;letter-spacing:1px;text-indent:0.8px">Three months</div>
  <div class="tbtn" style="left:636.5px;width:102.5px">Half year</div>
  <div class="tbtn" style="left:744.5px;width:67.5px">Year</div>
  <svg class="kicon" style="left:14.5px;top:144px" width="22" height="22" viewBox="0 0 22 22"><circle cx="11" cy="11" r="10.5" fill="#d8352a"/><path d="M3.5 11.5h2.2l1.3-3.5 1.5 6.5 1.3-4.5 0.8 1.5h1" fill="none" stroke="#fff" stroke-width="1" stroke-linejoin="round"/><circle cx="12.6" cy="11" r="0.9" fill="#fff"/><path d="M14.5 8.3a3.6 3.6 0 010 5.4M16.3 6.8a5.8 5.8 0 010 8.4" fill="none" stroke="#fff" stroke-width="0.9"/></svg><div class="ktitle" style="top:146px;letter-spacing:0px">PRECIPITATION-HEAT INDEX</div><div class="gline" style="top:177px"></div><div class="klab" style="top:187px;right:746px">Date:</div><div class="kval" style="top:187px;left:184px">2024.06.11.</div><div class="klab" style="top:210px;right:746px">Last KPI value:</div><div class="kval" style="top:210px;left:184px">0.905521 -</div><div class="grline" style="top:235.5px"></div><svg class="kicon" style="left:14.5px;top:254px" width="22" height="22" viewBox="0 0 22 22"><circle cx="11" cy="11" r="10.5" fill="#22bf2c"/><path d="M3.5 11.5h2.2l1.3-3.5 1.5 6.5 1.3-4.5 0.8 1.5h1" fill="none" stroke="#fff" stroke-width="1" stroke-linejoin="round"/><circle cx="12.6" cy="11" r="0.9" fill="#fff"/><path d="M14.5 8.3a3.6 3.6 0 010 5.4M16.3 6.8a5.8 5.8 0 010 8.4" fill="none" stroke="#fff" stroke-width="0.9"/></svg><div class="ktitle" style="top:256px;letter-spacing:0px">AVERAGE ANNUAL TEMPERATURE</div><div class="gline" style="top:287px"></div><div class="klab" style="top:296px;right:751px">Date:</div><div class="kval" style="top:296px;left:179px">2024.06.11.</div><div class="klab" style="top:320px;right:751px">Last KPI value:</div><div class="kval" style="top:320px;left:179px">10.959883 °C</div><div class="grline" style="top:345.5px"></div><svg class="kicon" style="left:14.5px;top:364px" width="22" height="22" viewBox="0 0 22 22"><circle cx="11" cy="11" r="10.5" fill="#22bf2c"/><path d="M3.5 11.5h2.2l1.3-3.5 1.5 6.5 1.3-4.5 0.8 1.5h1" fill="none" stroke="#fff" stroke-width="1" stroke-linejoin="round"/><circle cx="12.6" cy="11" r="0.9" fill="#fff"/><path d="M14.5 8.3a3.6 3.6 0 010 5.4M16.3 6.8a5.8 5.8 0 010 8.4" fill="none" stroke="#fff" stroke-width="0.9"/></svg><div class="ktitle" style="top:366px;letter-spacing:-0.08px">AVERAGE DAILY TEMPERATURE</div><div class="gline" style="top:397px"></div><div class="klab" style="top:406px;right:751px">Date:</div><div class="kval" style="top:406px;left:179px">2024.06.11.</div><div class="klab" style="top:430px;right:751px">Last KPI value:</div><div class="kval" style="top:430px;left:179px">27.406736 °C</div><div class="grline" style="top:455.5px"></div><svg class="kicon" style="left:14.5px;top:474px" width="22" height="22" viewBox="0 0 22 22"><circle cx="11" cy="11" r="10.5" fill="#22bf2c"/><path d="M3.5 11.5h2.2l1.3-3.5 1.5 6.5 1.3-4.5 0.8 1.5h1" fill="none" stroke="#fff" stroke-width="1" stroke-linejoin="round"/><circle cx="12.6" cy="11" r="0.9" fill="#fff"/><path d="M14.5 8.3a3.6 3.6 0 010 5.4M16.3 6.8a5.8 5.8 0 010 8.4" fill="none" stroke="#fff" stroke-width="0.9"/></svg><div class="ktitle" style="top:476px;letter-spacing:0.16px">DAILY MINIMUM TEMPERATURE</div><div class="gline" style="top:507px"></div><div class="klab" style="top:516px;right:746px">Date:</div><div class="kval" style="top:516px;left:184px">2024.06.11.</div><div class="klab" style="top:540px;right:746px">Last KPI value:</div><div class="kval" style="top:540px;left:184px">23.63 °C</div><div class="grline" style="top:565px"></div><svg class="kicon" style="left:14.5px;top:584px" width="22" height="22" viewBox="0 0 22 22"><circle cx="11" cy="11" r="10.5" fill="#22bf2c"/><path d="M3.5 11.5h2.2l1.3-3.5 1.5 6.5 1.3-4.5 0.8 1.5h1" fill="none" stroke="#fff" stroke-width="1" stroke-linejoin="round"/><circle cx="12.6" cy="11" r="0.9" fill="#fff"/><path d="M14.5 8.3a3.6 3.6 0 010 5.4M16.3 6.8a5.8 5.8 0 010 8.4" fill="none" stroke="#fff" stroke-width="0.9"/></svg><div class="ktitle" style="top:586px;letter-spacing:0px">TOTAL HEAT ANNUAL</div><div class="gline" style="top:617px"></div><div class="klab" style="top:626px;right:746px">Date:</div><div class="kval" style="top:626px;left:184px">2024.06.11.</div><div class="klab" style="top:650px;right:746px">Last KPI value:</div><div class="kval" style="top:650px;left:184px">659.245 °C</div><div class="grline" style="top:675px"></div><svg class="kicon" style="left:14.5px;top:704px" width="22" height="22" viewBox="0 0 22 22"><circle cx="11" cy="11" r="10.5" fill="#d8352a"/><path d="M3.5 11.5h2.2l1.3-3.5 1.5 6.5 1.3-4.5 0.8 1.5h1" fill="none" stroke="#fff" stroke-width="1" stroke-linejoin="round"/><circle cx="12.6" cy="11" r="0.9" fill="#fff"/><path d="M14.5 8.3a3.6 3.6 0 010 5.4M16.3 6.8a5.8 5.8 0 010 8.4" fill="none" stroke="#fff" stroke-width="0.9"/></svg><div class="ktitle" style="top:693.5px;line-height:21px">AMOUNT OF HEAT DURING ACTUAL<br>VEGETATION PERIOD</div><div class="gline" style="top:748px"></div><div class="klab" style="top:757px;right:746px">Date:</div><div class="kval" style="top:757px;left:184px">2024.06.11.</div><div class="klab" style="top:781px;right:746px">Last KPI value:</div><div class="kval" style="top:781px;left:184px">0 °C</div><div class="grline" style="top:805px"></div><svg class="kicon" style="left:14.5px;top:825px" width="22" height="22" viewBox="0 0 22 22"><circle cx="11" cy="11" r="10.5" fill="#22bf2c"/><path d="M3.5 11.5h2.2l1.3-3.5 1.5 6.5 1.3-4.5 0.8 1.5h1" fill="none" stroke="#fff" stroke-width="1" stroke-linejoin="round"/><circle cx="12.6" cy="11" r="0.9" fill="#fff"/><path d="M14.5 8.3a3.6 3.6 0 010 5.4M16.3 6.8a5.8 5.8 0 010 8.4" fill="none" stroke="#fff" stroke-width="0.9"/></svg><div class="ktitle" style="top:827px;letter-spacing:0px">ANNUAL RAINFALL</div><div class="gline" style="top:857px"></div><div class="klab" style="top:867px;right:746px">Date:</div><div class="kval" style="top:867px;left:184px">2024.06.11.</div><div class="klab" style="top:891px;right:746px">Last KPI value:</div><div class="kval" style="top:891px;left:184px">270 mm</div><div class="grline" style="top:915.5px"></div>
  <svg id="charts" width="927" height="930" viewBox="0 0 927 930" style="position:absolute;left:0;top:-23px">
  <line x1="365" y1="143" x2="881" y2="143" stroke="#e6e6e6" stroke-width="1"/>
<line x1="365" y1="181" x2="881" y2="181" stroke="#ccd6eb" stroke-width="1.3"/>
<line x1="470.5999999999999" y1="181" x2="470.5999999999999" y2="191" stroke="#ccd6eb" stroke-width="1"/>
<line x1="603" y1="181" x2="603" y2="191" stroke="#ccd6eb" stroke-width="1"/>
<line x1="736" y1="181" x2="736" y2="191" stroke="#ccd6eb" stroke-width="1"/>
<line x1="869" y1="181" x2="869" y2="191" stroke="#ccd6eb" stroke-width="1"/>
<polyline points="369.0,180.5 754.5,180.5 760.0,161.0 794.5,158.4 876.0,147.4" fill="none" stroke="#7cb5ec" stroke-width="2" stroke-linejoin="round" stroke-linecap="round"/>
<text x="347" y="147.5" class="yl" text-anchor="end">1</text>
<text x="347" y="185.5" class="yl" text-anchor="end">0</text>
<text x="470.8999999999999" y="203" class="xl" text-anchor="middle">2024.04.01.</text>
<text x="603.3" y="203" class="xl" text-anchor="middle">2024.04.25.</text>
<text x="736.3" y="203" class="xl" text-anchor="middle">2024.05.18.</text>
<text x="881" y="203" class="xl" text-anchor="end">2024.06.10.</text><line x1="373.5" y1="253.4" x2="881" y2="253.4" stroke="#e6e6e6" stroke-width="1"/>
<line x1="373.5" y1="291.4" x2="881" y2="291.4" stroke="#ccd6eb" stroke-width="1.3"/>
<line x1="476" y1="291.4" x2="476" y2="301.4" stroke="#ccd6eb" stroke-width="1"/>
<line x1="606.5999999999999" y1="291.4" x2="606.5999999999999" y2="301.4" stroke="#ccd6eb" stroke-width="1"/>
<line x1="738" y1="291.4" x2="738" y2="301.4" stroke="#ccd6eb" stroke-width="1"/>
<line x1="868.5999999999999" y1="291.4" x2="868.5999999999999" y2="301.4" stroke="#ccd6eb" stroke-width="1"/>
<polyline points="377.0,273.6 417.0,273.4 473.6,270.3 556.7,266.0 642.8,263.5 648.8,262.3 652.7,291.0 656.5,262.3 660.4,291.0 664.2,262.3 668.1,262.3 668.1,291.0 672.0,262.3 672.0,291.0 675.8,291.0 679.7,291.0 679.7,262.3 683.5,262.3 683.5,291.0 687.4,291.0 691.3,291.0 691.3,262.3 695.1,262.3 699.0,291.0 702.8,262.3 706.7,291.0 710.6,262.3 714.4,291.0 718.3,262.3 722.1,291.0 726.0,262.3 729.0,261.4 876.0,256.9" fill="none" stroke="#7cb5ec" stroke-width="2" stroke-linejoin="round" stroke-linecap="round"/>
<text x="355.5" y="257.9" class="yl" text-anchor="end">12</text>
<text x="355.5" y="295.9" class="yl" text-anchor="end">0</text>
<text x="476.3" y="313.4" class="xl" text-anchor="middle">2024.04.01.</text>
<text x="606.8999999999999" y="313.4" class="xl" text-anchor="middle">2024.04.25.</text>
<text x="738.3" y="313.4" class="xl" text-anchor="middle">2024.05.18.</text>
<text x="881" y="313.4" class="xl" text-anchor="end">2024.06.10.</text><line x1="373.5" y1="363" x2="881" y2="363" stroke="#e6e6e6" stroke-width="1"/>
<line x1="373.5" y1="401" x2="881" y2="401" stroke="#ccd6eb" stroke-width="1.3"/>
<line x1="476" y1="401" x2="476" y2="411" stroke="#ccd6eb" stroke-width="1"/>
<line x1="606.5999999999999" y1="401" x2="606.5999999999999" y2="411" stroke="#ccd6eb" stroke-width="1"/>
<line x1="738" y1="401" x2="738" y2="411" stroke="#ccd6eb" stroke-width="1"/>
<line x1="868.5999999999999" y1="401" x2="868.5999999999999" y2="411" stroke="#ccd6eb" stroke-width="1"/>
<polyline points="377.0,392.0 384.5,391.5 393.4,389.4 400.8,393.0 417.0,393.0 429.0,387.6 435.0,390.9 441.0,390.9 449.8,385.5 458.7,384.0 473.6,379.6 485.4,384.0 497.3,382.6 515.0,382.0 533.0,379.6 547.8,378.1 558.2,375.7 570.0,386.4 583.5,387.0 598.3,385.5 607.2,384.0 616.0,385.5 628.0,383.1 639.9,384.0 648.8,383.1 650.0,401.0 653.9,379.0 657.9,401.0 661.8,379.0 665.8,401.0 669.7,379.0 673.7,401.0 677.6,379.0 677.6,401.0 681.6,379.0 685.5,401.0 689.5,379.0 693.4,401.0 697.4,379.0 701.3,401.0 705.3,379.0 709.2,401.0 713.2,379.0 717.1,401.0 721.1,379.0 725.0,401.0 728.4,384.0 740.9,382.0 761.6,379.6 776.5,379.6 791.3,381.0 806.2,379.6 818.0,376.6 835.9,375.1 841.8,376.0 847.7,373.6 862.6,371.6 876.0,369.2" fill="none" stroke="#7cb5ec" stroke-width="2" stroke-linejoin="round" stroke-linecap="round"/>
<text x="355.5" y="367.5" class="yl" text-anchor="end">32</text>
<text x="355.5" y="405.5" class="yl" text-anchor="end">0</text>
<text x="476.3" y="423" class="xl" text-anchor="middle">2024.04.01.</text>
<text x="606.8999999999999" y="423" class="xl" text-anchor="middle">2024.04.25.</text>
<text x="738.3" y="423" class="xl" text-anchor="middle">2024.05.18.</text>
<text x="881" y="423" class="xl" text-anchor="end">2024.06.10.</text><line x1="373.5" y1="473.4" x2="881" y2="473.4" stroke="#e6e6e6" stroke-width="1"/>
<line x1="373.5" y1="511.4" x2="881" y2="511.4" stroke="#ccd6eb" stroke-width="1.3"/>
<line x1="476" y1="511.4" x2="476" y2="521.4" stroke="#ccd6eb" stroke-width="1"/>
<line x1="606.5999999999999" y1="511.4" x2="606.5999999999999" y2="521.4" stroke="#ccd6eb" stroke-width="1"/>
<line x1="738" y1="511.4" x2="738" y2="521.4" stroke="#ccd6eb" stroke-width="1"/>
<line x1="868.5999999999999" y1="511.4" x2="868.5999999999999" y2="521.4" stroke="#ccd6eb" stroke-width="1"/>
<polyline points="377.0,506.0 384.5,509.0 394.9,505.1 405.2,510.5 420.1,510.5 429.0,503.7 439.4,507.5 446.8,500.7 464.6,499.5 473.6,496.2 479.5,495.6 485.4,499.5 497.3,503.0 506.2,498.0 512.2,501.6 518.1,498.0 524.0,502.2 535.9,497.1 541.9,495.6 547.8,497.7 558.2,490.6 565.6,500.1 574.5,504.5 586.4,504.5 592.4,500.1 604.2,500.7 610.2,498.0 619.1,502.5 628.0,500.1 637.0,497.1 642.9,500.1 648.8,496.2 650.0,511.0 653.8,496.0 657.5,511.0 661.2,496.0 665.0,511.0 668.8,496.0 672.5,511.0 676.2,496.0 680.0,511.0 683.8,496.0 687.5,511.0 691.2,496.0 695.0,511.0 698.8,496.0 702.5,511.0 706.2,496.0 710.0,511.0 713.8,496.0 717.5,511.0 721.2,496.0 725.0,511.0 729.0,500.7 737.9,498.0 746.8,496.2 755.7,498.0 761.6,494.7 779.5,495.6 791.3,498.6 803.2,491.2 818.0,488.8 835.9,486.7 841.8,487.6 847.7,486.7 853.7,489.7 862.6,488.8 876.0,483.2" fill="none" stroke="#7cb5ec" stroke-width="2" stroke-linejoin="round" stroke-linecap="round"/>
<text x="355.5" y="477.9" class="yl" text-anchor="end">32</text>
<text x="355.5" y="515.9" class="yl" text-anchor="end">0</text>
<text x="476.3" y="533.4" class="xl" text-anchor="middle">2024.04.01.</text>
<text x="606.8999999999999" y="533.4" class="xl" text-anchor="middle">2024.04.25.</text>
<text x="738.3" y="533.4" class="xl" text-anchor="middle">2024.05.18.</text>
<text x="881" y="533.4" class="xl" text-anchor="end">2024.06.10.</text><line x1="381.5" y1="582.7" x2="881" y2="582.7" stroke="#e6e6e6" stroke-width="1"/>
<line x1="381.5" y1="621.3" x2="881" y2="621.3" stroke="#ccd6eb" stroke-width="1.3"/>
<line x1="482.5" y1="621.3" x2="482.5" y2="631.3" stroke="#ccd6eb" stroke-width="1"/>
<line x1="611" y1="621.3" x2="611" y2="631.3" stroke="#ccd6eb" stroke-width="1"/>
<line x1="740.3" y1="621.3" x2="740.3" y2="631.3" stroke="#ccd6eb" stroke-width="1"/>
<line x1="868.5999999999999" y1="621.3" x2="868.5999999999999" y2="631.3" stroke="#ccd6eb" stroke-width="1"/>
<polyline points="386.0,618.3 426.0,617.4 479.5,614.4 562.7,609.4 651.8,605.5 653.0,621.0 656.9,604.0 660.9,621.0 664.8,604.0 668.8,621.0 672.7,604.0 676.7,621.0 680.6,604.0 684.6,604.0 684.6,621.0 688.5,604.0 692.5,621.0 696.4,604.0 700.4,621.0 704.3,604.0 708.3,621.0 712.2,604.0 716.2,621.0 720.1,604.0 724.1,621.0 728.0,604.0 730.5,602.0 806.2,598.1 876.0,590.1" fill="none" stroke="#7cb5ec" stroke-width="2" stroke-linejoin="round" stroke-linecap="round"/>
<text x="363.5" y="587.2" class="yl" text-anchor="end">800</text>
<text x="363.5" y="625.8" class="yl" text-anchor="end">0</text>
<text x="482.8" y="643.3" class="xl" text-anchor="middle">2024.04.01.</text>
<text x="611.3" y="643.3" class="xl" text-anchor="middle">2024.04.25.</text>
<text x="740.5999999999999" y="643.3" class="xl" text-anchor="middle">2024.05.18.</text>
<text x="881" y="643.3" class="xl" text-anchor="end">2024.06.10.</text><line x1="366" y1="693.4" x2="881" y2="693.4" stroke="#e6e6e6" stroke-width="1"/>
<line x1="366" y1="731" x2="881" y2="731" stroke="#ccd6eb" stroke-width="1.3"/>
<line x1="470.5999999999999" y1="731" x2="470.5999999999999" y2="741" stroke="#ccd6eb" stroke-width="1"/>
<line x1="602.8" y1="731" x2="602.8" y2="741" stroke="#ccd6eb" stroke-width="1"/>
<line x1="735.5" y1="731" x2="735.5" y2="741" stroke="#ccd6eb" stroke-width="1"/>
<line x1="868.5999999999999" y1="731" x2="868.5999999999999" y2="741" stroke="#ccd6eb" stroke-width="1"/>
<polyline points="370.0,730.5 876.0,730.5" fill="none" stroke="#7cb5ec" stroke-width="2" stroke-linejoin="round" stroke-linecap="round"/>
<text x="348" y="697.9" class="yl" text-anchor="end">4</text>
<text x="348" y="735.5" class="yl" text-anchor="end">0</text>
<text x="470.8999999999999" y="753" class="xl" text-anchor="middle">2024.04.01.</text>
<text x="603.0999999999999" y="753" class="xl" text-anchor="middle">2024.04.25.</text>
<text x="735.8" y="753" class="xl" text-anchor="middle">2024.05.18.</text>
<text x="881" y="753" class="xl" text-anchor="end">2024.06.10.</text><line x1="381.5" y1="824" x2="881" y2="824" stroke="#e6e6e6" stroke-width="1"/>
<line x1="381.5" y1="862" x2="881" y2="862" stroke="#ccd6eb" stroke-width="1.3"/>
<line x1="482.5" y1="862" x2="482.5" y2="872" stroke="#ccd6eb" stroke-width="1"/>
<line x1="611" y1="862" x2="611" y2="872" stroke="#ccd6eb" stroke-width="1"/>
<line x1="740.3" y1="862" x2="740.3" y2="872" stroke="#ccd6eb" stroke-width="1"/>
<line x1="868.5999999999999" y1="862" x2="868.5999999999999" y2="872" stroke="#ccd6eb" stroke-width="1"/>
<polyline points="385.4,843.3 653.2,843.3" fill="none" stroke="#7cb5ec" stroke-width="2" stroke-linejoin="round" stroke-linecap="round"/>
<polyline points="669.0,843.3 675.5,843.3" fill="none" stroke="#7cb5ec" stroke-width="2" stroke-linejoin="round" stroke-linecap="round"/>
<polyline points="702.3,843.3 708.8,843.3" fill="none" stroke="#7cb5ec" stroke-width="2" stroke-linejoin="round" stroke-linecap="round"/>
<polyline points="730.5,843.3 797.9,843.3" fill="none" stroke="#7cb5ec" stroke-width="2" stroke-linejoin="round" stroke-linecap="round"/>
<polyline points="847.2,843.3 876.0,843.3" fill="none" stroke="#7cb5ec" stroke-width="2" stroke-linejoin="round" stroke-linecap="round"/>
<text x="363.5" y="828.5" class="yl" text-anchor="end">272</text>
<text x="363.5" y="866.5" class="yl" text-anchor="end">268</text>
<text x="482.8" y="884" class="xl" text-anchor="middle">2024.04.01.</text>
<text x="611.3" y="884" class="xl" text-anchor="middle">2024.04.25.</text>
<text x="740.5999999999999" y="884" class="xl" text-anchor="middle">2024.05.18.</text>
<text x="881" y="884" class="xl" text-anchor="end">2024.06.10.</text>
  </svg>
</div>
</body></html>
